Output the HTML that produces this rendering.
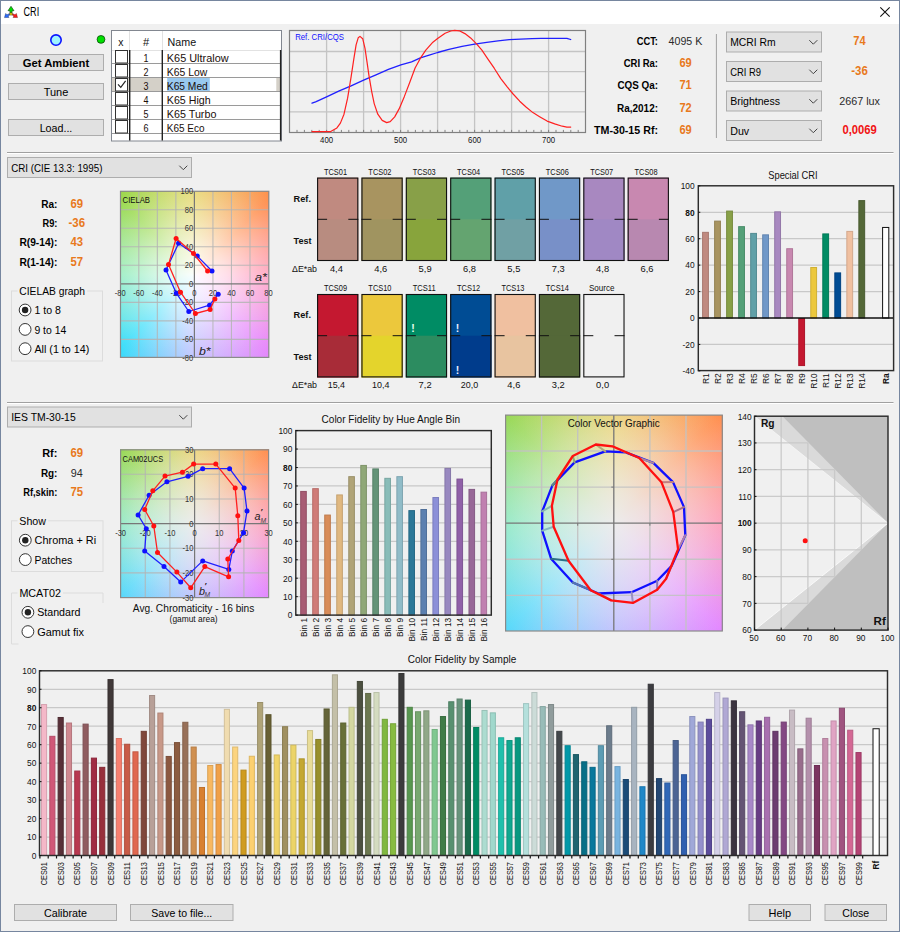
<!DOCTYPE html>
<html><head><meta charset="utf-8"><title>CRI</title>
<style>
html,body{margin:0;padding:0;}
body{width:900px;height:932px;position:relative;overflow:hidden;background:#f0f0f0;font-family:"Liberation Sans",sans-serif;}
.grad{position:absolute;background:
 radial-gradient(circle farthest-corner at 50% 50%, rgba(255,255,255,0.97) 0%, rgba(255,255,255,0.74) 28%, rgba(255,255,255,0.40) 58%, rgba(255,255,255,0.12) 85%, rgba(255,255,255,0) 100%),
 conic-gradient(from 0deg at 50% 50%, #e4d25c 0deg, #ff8c4a 45deg, #ff88b0 90deg, #e682fb 135deg, #b4b4ff 180deg, #30dcfa 225deg, #7ce8b0 270deg, #96d848 315deg, #e4d25c 360deg);}
.grad2{position:absolute;background:
 radial-gradient(circle farthest-corner at 50% 50%, rgba(236,236,236,1) 0%, rgba(238,238,238,0.86) 20%, rgba(242,242,242,0.66) 40%, rgba(246,246,246,0.44) 60%, rgba(250,250,250,0.2) 80%, rgba(255,255,255,0) 100%),
 conic-gradient(from 0deg at 50% 50%, #e6c850 0deg, #ff8e4e 45deg, #ff80a4 90deg, #e286ff 135deg, #aaacff 180deg, #56d8fa 225deg, #70e4b4 270deg, #98d856 315deg, #e6c850 360deg);}
svg{position:absolute;left:0;top:0;}
text{font-family:"Liberation Sans",sans-serif;}
</style></head>
<body>
<div class="grad" style="left:120px;top:191px;width:149px;height:167px"></div>
<div class="grad2" style="left:120px;top:449px;width:149px;height:149px"></div>
<div class="grad2" style="left:505px;top:415px;width:218px;height:216px"></div>

<svg width="900" height="932" viewBox="0 0 900 932">
<rect x="1.00" y="1.00" width="898.00" height="23.00" fill="#ffffff"/>
<rect x="0.50" y="0.50" width="899.00" height="931.00" fill="none" stroke="#76869f" stroke-width="1"/>
<g stroke-linejoin="round"><path d="M11 6.3 L14 10.7 L12.1 10.7 L12.1 12.7 L9.9 12.7 L9.9 10.7 L8 10.7 Z" fill="#00dd00" stroke="#123812" stroke-width="0.6"/><path d="M4.5 17.6 L5.6 13.5 L7 14.7 L9.5 13.5 L9.9 15 L8 16 L9 17.4 Z" fill="#2a6cff" stroke="#102050" stroke-width="0.4"/><path d="M17.5 17.6 L16.4 13.5 L15 14.7 L12.5 13.5 L12.1 15 L14 16 L13 17.4 Z" fill="#ff1818" stroke="#501010" stroke-width="0.4"/><rect x="9.8" y="12.8" width="2.4" height="2.3" fill="#f2e200" stroke="#222" stroke-width="0.4"/></g>
<text x="23.50" y="16.10" font-size="12.5" fill="#000" textLength="15.70" lengthAdjust="spacingAndGlyphs">CRI</text>
<path d="M880.3 7.3 L889.7 16.7 M889.7 7.3 L880.3 16.7" stroke="#111" stroke-width="1.1" fill="none"/>
<circle cx="56" cy="40.1" r="5.2" fill="#9ff4ff" stroke="#0a14ff" stroke-width="1.6"/>
<circle cx="101" cy="39.4" r="3.9" fill="#00e000" stroke="#0a4a0a" stroke-width="0.8"/>
<rect x="8.50" y="54.50" width="95.00" height="16.00" fill="#e1e1e1" stroke="#adadad" stroke-width="1"/>
<text x="22.80" y="66.60" font-size="11.5" fill="#000" font-weight="bold" textLength="66.40" lengthAdjust="spacingAndGlyphs">Get Ambient</text>
<rect x="8.50" y="83.50" width="95.00" height="16.00" fill="#e1e1e1" stroke="#adadad" stroke-width="1"/>
<text x="43.65" y="95.60" font-size="11.5" fill="#000" textLength="24.70" lengthAdjust="spacingAndGlyphs">Tune</text>
<rect x="8.50" y="119.50" width="95.00" height="16.00" fill="#e1e1e1" stroke="#adadad" stroke-width="1"/>
<text x="39.65" y="131.60" font-size="11.5" fill="#000" textLength="32.70" lengthAdjust="spacingAndGlyphs">Load...</text>
<rect x="111.50" y="30.50" width="170.00" height="110.50" fill="#ffffff" stroke="#828790" stroke-width="1"/>
<line x1="112.00" y1="50.50" x2="281.00" y2="50.50" stroke="#e2e2e2" stroke-width="1"/>
<line x1="129.50" y1="31.00" x2="129.50" y2="50.00" stroke="#e2e2e2" stroke-width="1"/>
<line x1="162.50" y1="31.00" x2="162.50" y2="50.00" stroke="#e2e2e2" stroke-width="1"/>
<text x="118.20" y="46.00" font-size="11.5" fill="#111" textLength="5.20" lengthAdjust="spacingAndGlyphs">x</text>
<text x="142.90" y="45.50" font-size="11.5" fill="#111" textLength="6.20" lengthAdjust="spacingAndGlyphs">#</text>
<text x="167.60" y="45.50" font-size="11.5" fill="#111" textLength="28.60" lengthAdjust="spacingAndGlyphs">Name</text>
<rect x="112.00" y="77.50" width="50.00" height="13.50" fill="#d4d0c8"/>
<rect x="167.20" y="78.00" width="42.60" height="13.00" fill="#99c9ef"/>
<rect x="276.30" y="77.50" width="4.00" height="13.50" fill="#d4d0c8"/>
<line x1="112.00" y1="63.50" x2="281.00" y2="63.50" stroke="#9a9a9a" stroke-width="1"/>
<text x="143.50" y="61.80" font-size="11.5" fill="#1a0e0a" textLength="5.00" lengthAdjust="spacingAndGlyphs">1</text>
<text x="166.80" y="61.80" font-size="11.5" fill="#1a0e0a" textLength="61.80" lengthAdjust="spacingAndGlyphs">K65 Ultralow</text>
<rect x="115.50" y="50.50" width="12.00" height="12.50" fill="#ffffff" stroke="#333333" stroke-width="1"/>
<line x1="112.00" y1="77.50" x2="281.00" y2="77.50" stroke="#9a9a9a" stroke-width="1"/>
<text x="143.50" y="75.80" font-size="11.5" fill="#1a0e0a" textLength="5.00" lengthAdjust="spacingAndGlyphs">2</text>
<text x="166.80" y="75.80" font-size="11.5" fill="#1a0e0a" textLength="40.40" lengthAdjust="spacingAndGlyphs">K65 Low</text>
<rect x="115.50" y="64.50" width="12.00" height="12.50" fill="#ffffff" stroke="#333333" stroke-width="1"/>
<line x1="112.00" y1="91.50" x2="281.00" y2="91.50" stroke="#9a9a9a" stroke-width="1"/>
<text x="143.50" y="89.80" font-size="11.5" fill="#1a0e0a" textLength="5.00" lengthAdjust="spacingAndGlyphs">3</text>
<text x="166.80" y="89.80" font-size="11.5" fill="#1a0e0a" textLength="41.00" lengthAdjust="spacingAndGlyphs">K65 Med</text>
<rect x="115.50" y="78.50" width="12.00" height="12.50" fill="#ffffff" stroke="#333333" stroke-width="1"/>
<line x1="112.00" y1="105.50" x2="281.00" y2="105.50" stroke="#9a9a9a" stroke-width="1"/>
<text x="143.50" y="103.80" font-size="11.5" fill="#1a0e0a" textLength="5.00" lengthAdjust="spacingAndGlyphs">4</text>
<text x="166.80" y="103.80" font-size="11.5" fill="#1a0e0a" textLength="43.80" lengthAdjust="spacingAndGlyphs">K65 High</text>
<rect x="115.50" y="92.50" width="12.00" height="12.50" fill="#ffffff" stroke="#333333" stroke-width="1"/>
<line x1="112.00" y1="119.50" x2="281.00" y2="119.50" stroke="#9a9a9a" stroke-width="1"/>
<text x="143.50" y="117.80" font-size="11.5" fill="#1a0e0a" textLength="5.00" lengthAdjust="spacingAndGlyphs">5</text>
<text x="166.80" y="117.80" font-size="11.5" fill="#1a0e0a" textLength="49.60" lengthAdjust="spacingAndGlyphs">K65 Turbo</text>
<rect x="115.50" y="106.50" width="12.00" height="12.50" fill="#ffffff" stroke="#333333" stroke-width="1"/>
<line x1="112.00" y1="133.50" x2="281.00" y2="133.50" stroke="#9a9a9a" stroke-width="1"/>
<text x="143.50" y="131.80" font-size="11.5" fill="#1a0e0a" textLength="5.00" lengthAdjust="spacingAndGlyphs">6</text>
<text x="166.80" y="131.80" font-size="11.5" fill="#1a0e0a" textLength="37.80" lengthAdjust="spacingAndGlyphs">K65 Eco</text>
<rect x="115.50" y="120.50" width="12.00" height="12.50" fill="#ffffff" stroke="#333333" stroke-width="1"/>
<path d="M118 84.3 L120.8 87.4 L125.6 80.9" stroke="#222" stroke-width="1.2" fill="none"/>
<line x1="129.70" y1="50.00" x2="129.70" y2="140.50" stroke="#222" stroke-width="1.4"/>
<line x1="162.30" y1="50.00" x2="162.30" y2="140.50" stroke="#222" stroke-width="1.4"/>
<line x1="280.60" y1="50.00" x2="280.60" y2="140.50" stroke="#222" stroke-width="1.4"/>
<rect x="289.50" y="30.50" width="296.00" height="102.00" fill="#f0f0f0" stroke="none" stroke-width="1"/>
<line x1="326.60" y1="30.50" x2="326.60" y2="132.50" stroke="#c4c4c4" stroke-width="1.3"/>
<line x1="363.60" y1="30.50" x2="363.60" y2="132.50" stroke="#c4c4c4" stroke-width="1.3"/>
<line x1="400.60" y1="30.50" x2="400.60" y2="132.50" stroke="#c4c4c4" stroke-width="1.3"/>
<line x1="437.60" y1="30.50" x2="437.60" y2="132.50" stroke="#c4c4c4" stroke-width="1.3"/>
<line x1="474.60" y1="30.50" x2="474.60" y2="132.50" stroke="#c4c4c4" stroke-width="1.3"/>
<line x1="511.60" y1="30.50" x2="511.60" y2="132.50" stroke="#c4c4c4" stroke-width="1.3"/>
<line x1="548.60" y1="30.50" x2="548.60" y2="132.50" stroke="#c4c4c4" stroke-width="1.3"/>
<line x1="289.50" y1="51.50" x2="585.50" y2="51.50" stroke="#c4c4c4" stroke-width="1.3"/>
<line x1="289.50" y1="71.60" x2="585.50" y2="71.60" stroke="#c4c4c4" stroke-width="1.3"/>
<line x1="289.50" y1="91.60" x2="585.50" y2="91.60" stroke="#c4c4c4" stroke-width="1.3"/>
<line x1="289.50" y1="111.80" x2="585.50" y2="111.80" stroke="#c4c4c4" stroke-width="1.3"/>
<line x1="297.00" y1="129.90" x2="297.00" y2="132.50" stroke="#777" stroke-width="0.9"/>
<line x1="304.40" y1="129.90" x2="304.40" y2="132.50" stroke="#777" stroke-width="0.9"/>
<line x1="311.80" y1="129.90" x2="311.80" y2="132.50" stroke="#777" stroke-width="0.9"/>
<line x1="319.20" y1="129.90" x2="319.20" y2="132.50" stroke="#777" stroke-width="0.9"/>
<line x1="326.60" y1="129.90" x2="326.60" y2="132.50" stroke="#777" stroke-width="0.9"/>
<line x1="334.00" y1="129.90" x2="334.00" y2="132.50" stroke="#777" stroke-width="0.9"/>
<line x1="341.40" y1="129.90" x2="341.40" y2="132.50" stroke="#777" stroke-width="0.9"/>
<line x1="348.80" y1="129.90" x2="348.80" y2="132.50" stroke="#777" stroke-width="0.9"/>
<line x1="356.20" y1="129.90" x2="356.20" y2="132.50" stroke="#777" stroke-width="0.9"/>
<line x1="363.60" y1="129.90" x2="363.60" y2="132.50" stroke="#777" stroke-width="0.9"/>
<line x1="371.00" y1="129.90" x2="371.00" y2="132.50" stroke="#777" stroke-width="0.9"/>
<line x1="378.40" y1="129.90" x2="378.40" y2="132.50" stroke="#777" stroke-width="0.9"/>
<line x1="385.80" y1="129.90" x2="385.80" y2="132.50" stroke="#777" stroke-width="0.9"/>
<line x1="393.20" y1="129.90" x2="393.20" y2="132.50" stroke="#777" stroke-width="0.9"/>
<line x1="400.60" y1="129.90" x2="400.60" y2="132.50" stroke="#777" stroke-width="0.9"/>
<line x1="408.00" y1="129.90" x2="408.00" y2="132.50" stroke="#777" stroke-width="0.9"/>
<line x1="415.40" y1="129.90" x2="415.40" y2="132.50" stroke="#777" stroke-width="0.9"/>
<line x1="422.80" y1="129.90" x2="422.80" y2="132.50" stroke="#777" stroke-width="0.9"/>
<line x1="430.20" y1="129.90" x2="430.20" y2="132.50" stroke="#777" stroke-width="0.9"/>
<line x1="437.60" y1="129.90" x2="437.60" y2="132.50" stroke="#777" stroke-width="0.9"/>
<line x1="445.00" y1="129.90" x2="445.00" y2="132.50" stroke="#777" stroke-width="0.9"/>
<line x1="452.40" y1="129.90" x2="452.40" y2="132.50" stroke="#777" stroke-width="0.9"/>
<line x1="459.80" y1="129.90" x2="459.80" y2="132.50" stroke="#777" stroke-width="0.9"/>
<line x1="467.20" y1="129.90" x2="467.20" y2="132.50" stroke="#777" stroke-width="0.9"/>
<line x1="474.60" y1="129.90" x2="474.60" y2="132.50" stroke="#777" stroke-width="0.9"/>
<line x1="482.00" y1="129.90" x2="482.00" y2="132.50" stroke="#777" stroke-width="0.9"/>
<line x1="489.40" y1="129.90" x2="489.40" y2="132.50" stroke="#777" stroke-width="0.9"/>
<line x1="496.80" y1="129.90" x2="496.80" y2="132.50" stroke="#777" stroke-width="0.9"/>
<line x1="504.20" y1="129.90" x2="504.20" y2="132.50" stroke="#777" stroke-width="0.9"/>
<line x1="511.60" y1="129.90" x2="511.60" y2="132.50" stroke="#777" stroke-width="0.9"/>
<line x1="519.00" y1="129.90" x2="519.00" y2="132.50" stroke="#777" stroke-width="0.9"/>
<line x1="526.40" y1="129.90" x2="526.40" y2="132.50" stroke="#777" stroke-width="0.9"/>
<line x1="533.80" y1="129.90" x2="533.80" y2="132.50" stroke="#777" stroke-width="0.9"/>
<line x1="541.20" y1="129.90" x2="541.20" y2="132.50" stroke="#777" stroke-width="0.9"/>
<line x1="548.60" y1="129.90" x2="548.60" y2="132.50" stroke="#777" stroke-width="0.9"/>
<line x1="556.00" y1="129.90" x2="556.00" y2="132.50" stroke="#777" stroke-width="0.9"/>
<line x1="563.40" y1="129.90" x2="563.40" y2="132.50" stroke="#777" stroke-width="0.9"/>
<line x1="570.80" y1="129.90" x2="570.80" y2="132.50" stroke="#777" stroke-width="0.9"/>
<line x1="578.20" y1="129.90" x2="578.20" y2="132.50" stroke="#777" stroke-width="0.9"/>
<rect x="289.50" y="30.50" width="296.00" height="102.00" fill="none" stroke="#808080" stroke-width="1.2"/>
<path d="M312.0 103.2 L315.6 101.8 L326.6 96.8 L338.7 91.1 L351.1 85.8 L363.6 80.1 L376.0 74.8 L388.4 69.4 L400.9 64.8 L411.6 61.8 L420.4 57.9 L427.6 55.6 L430.0 54.9 L437.6 52.5 L448.9 49.3 L462.1 46.4 L474.6 44.2 L486.7 42.3 L498.0 40.8 L509.3 39.6 L520.7 39.1 L532.0 38.7 L541.4 38.3 L554.7 38.3 L566.9 38.3 L570.7 39.5" fill="none" stroke="#2020ff" stroke-width="1.3" stroke-linejoin="round" stroke-linecap="round"/>
<path d="M312.0 131.6 L330.7 131.6 L336.9 127.9 L340.4 123.1 L344.0 114.2 L347.6 98.2 L351.1 76.9 L353.8 59.1 L356.1 44.9 L358.2 37.8 L360.0 36.4 L362.7 38.7 L365.0 48.4 L367.1 62.7 L368.9 75.1 L371.6 91.1 L374.2 103.6 L377.8 114.2 L382.2 120.4 L386.7 122.6 L390.2 121.7 L394.7 116.9 L399.1 108.9 L404.4 96.4 L409.8 82.2 L415.1 68.0 L420.4 58.2 L425.8 50.2 L432.9 42.2 L437.6 38.5 L445.1 33.2 L450.8 31.0 L454.6 30.4 L459.3 30.8 L464.9 33.6 L470.6 37.9 L476.3 43.6 L481.9 50.2 L487.6 58.7 L494.2 68.2 L500.8 78.6 L507.4 87.1 L513.1 94.0 L519.7 101.2 L526.3 107.3 L532.9 112.6 L539.6 116.7 L547.1 121.1 L554.7 123.9 L562.2 126.2 L566.9 127.1 L570.7 127.1" fill="none" stroke="#ff2020" stroke-width="1.2" stroke-linejoin="round" stroke-linecap="round"/>
<text x="295.20" y="39.60" font-size="8.8" fill="#1010ff" textLength="48.80" lengthAdjust="spacingAndGlyphs">Ref. CRI/CQS</text>
<text x="320.10" y="143.00" font-size="8.6" fill="#111" textLength="13.00" lengthAdjust="spacingAndGlyphs">400</text>
<text x="394.10" y="143.00" font-size="8.6" fill="#111" textLength="13.00" lengthAdjust="spacingAndGlyphs">500</text>
<text x="468.10" y="143.00" font-size="8.6" fill="#111" textLength="13.00" lengthAdjust="spacingAndGlyphs">600</text>
<text x="542.10" y="143.00" font-size="8.6" fill="#111" textLength="13.00" lengthAdjust="spacingAndGlyphs">700</text>
<text x="636.70" y="44.90" font-size="11.8" fill="#000" font-weight="bold" textLength="21.30" lengthAdjust="spacingAndGlyphs">CCT:</text>
<text x="623.70" y="67.30" font-size="11.8" fill="#000" font-weight="bold" textLength="34.30" lengthAdjust="spacingAndGlyphs">CRI Ra:</text>
<text x="617.50" y="89.40" font-size="11.8" fill="#000" font-weight="bold" textLength="40.50" lengthAdjust="spacingAndGlyphs">CQS Qa:</text>
<text x="617.10" y="111.60" font-size="11.8" fill="#000" font-weight="bold" textLength="40.90" lengthAdjust="spacingAndGlyphs">Ra,2012:</text>
<text x="594.00" y="133.80" font-size="11.8" fill="#000" font-weight="bold" textLength="64.00" lengthAdjust="spacingAndGlyphs">TM-30-15 Rf:</text>
<text x="668.60" y="44.90" font-size="11.5" fill="#2a2a2a" textLength="33.70" lengthAdjust="spacingAndGlyphs">4095 K</text>
<text x="679.45" y="67.30" font-size="12.2" fill="#e8791c" font-weight="bold" textLength="12.30" lengthAdjust="spacingAndGlyphs">69</text>
<text x="679.45" y="89.40" font-size="12.2" fill="#e8791c" font-weight="bold" textLength="12.30" lengthAdjust="spacingAndGlyphs">71</text>
<text x="679.45" y="111.60" font-size="12.2" fill="#e8791c" font-weight="bold" textLength="12.30" lengthAdjust="spacingAndGlyphs">72</text>
<text x="679.45" y="133.80" font-size="12.2" fill="#e8791c" font-weight="bold" textLength="12.30" lengthAdjust="spacingAndGlyphs">69</text>
<line x1="716.40" y1="34.00" x2="716.40" y2="138.00" stroke="#a0a0a0" stroke-width="1"/>
<rect x="726.50" y="32.00" width="95.00" height="20.00" fill="#e1e1e1" stroke="#adadad" stroke-width="1"/>
<text x="730.20" y="46.20" font-size="11.5" fill="#000" textLength="45.40" lengthAdjust="spacingAndGlyphs">MCRI Rm</text>
<path d="M809.3 40.2 L813.3 44.2 L817.3 40.2" fill="none" stroke="#444" stroke-width="1"/>
<rect x="726.50" y="61.50" width="95.00" height="20.00" fill="#e1e1e1" stroke="#adadad" stroke-width="1"/>
<text x="730.20" y="75.70" font-size="11.5" fill="#000" textLength="30.80" lengthAdjust="spacingAndGlyphs">CRI R9</text>
<path d="M809.3 69.7 L813.3 73.7 L817.3 69.7" fill="none" stroke="#444" stroke-width="1"/>
<rect x="726.50" y="91.00" width="95.00" height="20.00" fill="#e1e1e1" stroke="#adadad" stroke-width="1"/>
<text x="730.20" y="105.20" font-size="11.5" fill="#000" textLength="49.80" lengthAdjust="spacingAndGlyphs">Brightness</text>
<path d="M809.3 99.2 L813.3 103.2 L817.3 99.2" fill="none" stroke="#444" stroke-width="1"/>
<rect x="726.50" y="120.50" width="95.00" height="20.00" fill="#e1e1e1" stroke="#adadad" stroke-width="1"/>
<text x="730.20" y="134.70" font-size="11.5" fill="#000" textLength="19.00" lengthAdjust="spacingAndGlyphs">Duv</text>
<path d="M809.3 128.7 L813.3 132.7 L817.3 128.7" fill="none" stroke="#444" stroke-width="1"/>
<text x="853.35" y="45.20" font-size="12.2" fill="#e8791c" font-weight="bold" textLength="12.30" lengthAdjust="spacingAndGlyphs">74</text>
<text x="851.20" y="74.70" font-size="12.2" fill="#e8791c" font-weight="bold" textLength="16.60" lengthAdjust="spacingAndGlyphs">-36</text>
<text x="839.20" y="105.00" font-size="11.5" fill="#2a2a2a" textLength="40.80" lengthAdjust="spacingAndGlyphs">2667 lux</text>
<text x="842.40" y="134.40" font-size="12.2" fill="#f01414" font-weight="bold" textLength="34.40" lengthAdjust="spacingAndGlyphs">0,0069</text>
<line x1="7.00" y1="152.50" x2="893.50" y2="152.50" stroke="#a0a0a0" stroke-width="1"/>
<line x1="7.00" y1="153.50" x2="893.50" y2="153.50" stroke="#ffffff" stroke-width="1"/>
<line x1="7.00" y1="402.50" x2="893.50" y2="402.50" stroke="#a0a0a0" stroke-width="1"/>
<line x1="7.00" y1="403.50" x2="893.50" y2="403.50" stroke="#ffffff" stroke-width="1"/>
<rect x="7.50" y="157.50" width="184.00" height="20.00" fill="#e1e1e1" stroke="#adadad" stroke-width="1"/>
<text x="11.20" y="171.70" font-size="11.5" fill="#000" textLength="91.20" lengthAdjust="spacingAndGlyphs">CRI (CIE 13.3: 1995)</text>
<path d="M179.3 165.7 L183.3 169.7 L187.3 165.7" fill="none" stroke="#444" stroke-width="1"/>
<text x="41.20" y="207.80" font-size="11.8" fill="#000" font-weight="bold" textLength="16.20" lengthAdjust="spacingAndGlyphs">Ra:</text>
<text x="42.50" y="226.90" font-size="11.8" fill="#000" font-weight="bold" textLength="14.90" lengthAdjust="spacingAndGlyphs">R9:</text>
<text x="19.40" y="246.30" font-size="11.8" fill="#000" font-weight="bold" textLength="38.00" lengthAdjust="spacingAndGlyphs">R(9-14):</text>
<text x="19.40" y="265.60" font-size="11.8" fill="#000" font-weight="bold" textLength="38.00" lengthAdjust="spacingAndGlyphs">R(1-14):</text>
<text x="70.50" y="207.80" font-size="12.2" fill="#e8791c" font-weight="bold" textLength="12.60" lengthAdjust="spacingAndGlyphs">69</text>
<text x="68.50" y="226.90" font-size="12.2" fill="#e8791c" font-weight="bold" textLength="16.60" lengthAdjust="spacingAndGlyphs">-36</text>
<text x="70.50" y="246.30" font-size="12.2" fill="#e8791c" font-weight="bold" textLength="12.60" lengthAdjust="spacingAndGlyphs">43</text>
<text x="70.50" y="265.60" font-size="12.2" fill="#e8791c" font-weight="bold" textLength="12.60" lengthAdjust="spacingAndGlyphs">57</text>
<rect x="11.50" y="291.00" width="91.00" height="70.00" fill="none" stroke="#dcdcdc" stroke-width="1"/>
<rect x="17.50" y="284.50" width="69.70" height="12.00" fill="#f0f0f0"/>
<text x="19.30" y="294.70" font-size="11.5" fill="#000" textLength="65.70" lengthAdjust="spacingAndGlyphs">CIELAB graph</text>
<circle cx="25.1" cy="310" r="5.9" fill="#fff" stroke="#333" stroke-width="1"/>
<circle cx="25.1" cy="310" r="3.2" fill="#222"/>
<text x="34.40" y="314.10" font-size="11.5" fill="#000" textLength="26.50" lengthAdjust="spacingAndGlyphs">1 to 8</text>
<circle cx="25.1" cy="329.4" r="5.9" fill="#fff" stroke="#333" stroke-width="1"/>
<text x="34.40" y="333.50" font-size="11.5" fill="#000" textLength="31.90" lengthAdjust="spacingAndGlyphs">9 to 14</text>
<circle cx="25.1" cy="348.7" r="5.9" fill="#fff" stroke="#333" stroke-width="1"/>
<text x="34.40" y="352.80" font-size="11.5" fill="#000" textLength="54.90" lengthAdjust="spacingAndGlyphs">All (1 to 14)</text>
<line x1="138.81" y1="191.30" x2="138.81" y2="357.40" stroke="#b4b4b4" stroke-width="1.1" stroke-opacity="0.85"/>
<line x1="157.34" y1="191.30" x2="157.34" y2="357.40" stroke="#b4b4b4" stroke-width="1.1" stroke-opacity="0.85"/>
<line x1="175.87" y1="191.30" x2="175.87" y2="357.40" stroke="#b4b4b4" stroke-width="1.1" stroke-opacity="0.85"/>
<line x1="212.93" y1="191.30" x2="212.93" y2="357.40" stroke="#b4b4b4" stroke-width="1.1" stroke-opacity="0.85"/>
<line x1="231.46" y1="191.30" x2="231.46" y2="357.40" stroke="#b4b4b4" stroke-width="1.1" stroke-opacity="0.85"/>
<line x1="249.99" y1="191.30" x2="249.99" y2="357.40" stroke="#b4b4b4" stroke-width="1.1" stroke-opacity="0.85"/>
<line x1="120.50" y1="209.68" x2="268.80" y2="209.68" stroke="#b4b4b4" stroke-width="1.1" stroke-opacity="0.85"/>
<line x1="120.50" y1="228.21" x2="268.80" y2="228.21" stroke="#b4b4b4" stroke-width="1.1" stroke-opacity="0.85"/>
<line x1="120.50" y1="246.74" x2="268.80" y2="246.74" stroke="#b4b4b4" stroke-width="1.1" stroke-opacity="0.85"/>
<line x1="120.50" y1="265.27" x2="268.80" y2="265.27" stroke="#b4b4b4" stroke-width="1.1" stroke-opacity="0.85"/>
<line x1="120.50" y1="302.33" x2="268.80" y2="302.33" stroke="#b4b4b4" stroke-width="1.1" stroke-opacity="0.85"/>
<line x1="120.50" y1="320.86" x2="268.80" y2="320.86" stroke="#b4b4b4" stroke-width="1.1" stroke-opacity="0.85"/>
<line x1="120.50" y1="339.39" x2="268.80" y2="339.39" stroke="#b4b4b4" stroke-width="1.1" stroke-opacity="0.85"/>
<line x1="194.40" y1="191.30" x2="194.40" y2="357.40" stroke="#777" stroke-width="1.2"/>
<line x1="120.50" y1="283.80" x2="268.80" y2="283.80" stroke="#777" stroke-width="1.2"/>
<rect x="120.50" y="191.30" width="148.30" height="166.10" fill="none" stroke="#8a8a8a" stroke-width="1.2"/>
<text x="122.60" y="203.00" font-size="8.8" fill="#111" textLength="27.40" lengthAdjust="spacingAndGlyphs">CIELAB</text>
<text x="114.83" y="295.60" font-size="8.2" fill="#333" textLength="10.90" lengthAdjust="spacingAndGlyphs">-80</text>
<text x="133.36" y="295.60" font-size="8.2" fill="#333" textLength="10.90" lengthAdjust="spacingAndGlyphs">-60</text>
<text x="151.89" y="295.60" font-size="8.2" fill="#333" textLength="10.90" lengthAdjust="spacingAndGlyphs">-40</text>
<text x="170.42" y="295.60" font-size="8.2" fill="#333" textLength="10.90" lengthAdjust="spacingAndGlyphs">-20</text>
<text x="192.30" y="295.60" font-size="8.2" fill="#333" textLength="4.20" lengthAdjust="spacingAndGlyphs">0</text>
<text x="208.73" y="295.60" font-size="8.2" fill="#333" textLength="8.39" lengthAdjust="spacingAndGlyphs">20</text>
<text x="227.26" y="295.60" font-size="8.2" fill="#333" textLength="8.39" lengthAdjust="spacingAndGlyphs">40</text>
<text x="245.79" y="295.60" font-size="8.2" fill="#333" textLength="8.39" lengthAdjust="spacingAndGlyphs">60</text>
<text x="264.32" y="295.60" font-size="8.2" fill="#333" textLength="8.39" lengthAdjust="spacingAndGlyphs">80</text>
<text x="180.61" y="194.15" font-size="8.2" fill="#333" textLength="12.59" lengthAdjust="spacingAndGlyphs">100</text>
<text x="184.81" y="212.68" font-size="8.2" fill="#333" textLength="8.39" lengthAdjust="spacingAndGlyphs">80</text>
<text x="184.81" y="231.21" font-size="8.2" fill="#333" textLength="8.39" lengthAdjust="spacingAndGlyphs">60</text>
<text x="184.81" y="249.74" font-size="8.2" fill="#333" textLength="8.39" lengthAdjust="spacingAndGlyphs">40</text>
<text x="184.81" y="268.27" font-size="8.2" fill="#333" textLength="8.39" lengthAdjust="spacingAndGlyphs">20</text>
<text x="189.00" y="286.80" font-size="8.2" fill="#333" textLength="4.20" lengthAdjust="spacingAndGlyphs">0</text>
<text x="182.30" y="305.33" font-size="8.2" fill="#333" textLength="10.90" lengthAdjust="spacingAndGlyphs">-20</text>
<text x="182.30" y="323.86" font-size="8.2" fill="#333" textLength="10.90" lengthAdjust="spacingAndGlyphs">-40</text>
<text x="182.30" y="342.39" font-size="8.2" fill="#333" textLength="10.90" lengthAdjust="spacingAndGlyphs">-60</text>
<text x="182.30" y="360.92" font-size="8.2" fill="#333" textLength="10.90" lengthAdjust="spacingAndGlyphs">-80</text>
<text x="255.00" y="280.60" font-size="11.5" fill="#222" font-style="italic" textLength="12.00" lengthAdjust="spacingAndGlyphs">a*</text>
<text x="199.00" y="354.60" font-size="11.5" fill="#222" font-style="italic" textLength="11.60" lengthAdjust="spacingAndGlyphs">b*</text>
<path d="M212.0 271.0 L197.3 256.1 L178.6 243.3 L166.0 270.0 L176.3 293.2 L188.8 311.5 L209.5 305.2 L218.2 294.2" fill="none" stroke="#2020ff" stroke-width="1.3" stroke-linejoin="round" stroke-linecap="round"/>
<circle cx="212.0" cy="271.0" r="2.5" fill="#1010ff"/>
<circle cx="197.3" cy="256.1" r="2.5" fill="#1010ff"/>
<circle cx="178.6" cy="243.3" r="2.5" fill="#1010ff"/>
<circle cx="166.0" cy="270.0" r="2.5" fill="#1010ff"/>
<circle cx="176.3" cy="293.2" r="2.5" fill="#1010ff"/>
<circle cx="188.8" cy="311.5" r="2.5" fill="#1010ff"/>
<circle cx="209.5" cy="305.2" r="2.5" fill="#1010ff"/>
<circle cx="218.2" cy="294.2" r="2.5" fill="#1010ff"/>
<path d="M207.6 271.0 L193.5 253.6 L176.1 238.5 L168.5 264.6 L180.5 292.2 L195.4 313.5 L210.1 309.6 L214.9 299.0" fill="none" stroke="#ff2020" stroke-width="1.3" stroke-linejoin="round" stroke-linecap="round"/>
<circle cx="207.6" cy="271.0" r="2.5" fill="#ff1010"/>
<circle cx="193.5" cy="253.6" r="2.5" fill="#ff1010"/>
<circle cx="176.1" cy="238.5" r="2.5" fill="#ff1010"/>
<circle cx="168.5" cy="264.6" r="2.5" fill="#ff1010"/>
<circle cx="180.5" cy="292.2" r="2.5" fill="#ff1010"/>
<circle cx="195.4" cy="313.5" r="2.5" fill="#ff1010"/>
<circle cx="210.1" cy="309.6" r="2.5" fill="#ff1010"/>
<circle cx="214.9" cy="299.0" r="2.5" fill="#ff1010"/>
<rect x="317.10" y="177.60" width="41.20" height="83.40" fill="#c08a80"/>
<rect x="317.10" y="219.30" width="41.20" height="41.70" fill="#b88c80"/>
<rect x="317.60" y="178.10" width="40.20" height="82.40" fill="none" stroke="#111" stroke-width="1.1"/>
<line x1="317.10" y1="219.30" x2="327.10" y2="219.30" stroke="#111" stroke-width="1"/>
<line x1="348.30" y1="219.30" x2="358.30" y2="219.30" stroke="#111" stroke-width="1"/>
<text x="324.00" y="174.90" font-size="9.3" fill="#111" textLength="23.00" lengthAdjust="spacingAndGlyphs">TCS01</text>
<text x="329.90" y="271.60" font-size="9.3" fill="#111" textLength="13.00" lengthAdjust="spacingAndGlyphs">4,4</text>
<rect x="361.47" y="177.60" width="41.20" height="83.40" fill="#a89460"/>
<rect x="361.47" y="219.30" width="41.20" height="41.70" fill="#a09460"/>
<rect x="361.97" y="178.10" width="40.20" height="82.40" fill="none" stroke="#111" stroke-width="1.1"/>
<line x1="361.47" y1="219.30" x2="371.47" y2="219.30" stroke="#111" stroke-width="1"/>
<line x1="392.67" y1="219.30" x2="402.67" y2="219.30" stroke="#111" stroke-width="1"/>
<text x="368.37" y="174.90" font-size="9.3" fill="#111" textLength="23.00" lengthAdjust="spacingAndGlyphs">TCS02</text>
<text x="374.27" y="271.60" font-size="9.3" fill="#111" textLength="13.00" lengthAdjust="spacingAndGlyphs">4,6</text>
<rect x="405.84" y="177.60" width="41.20" height="83.40" fill="#88a048"/>
<rect x="405.84" y="219.30" width="41.20" height="41.70" fill="#88a43c"/>
<rect x="406.34" y="178.10" width="40.20" height="82.40" fill="none" stroke="#111" stroke-width="1.1"/>
<line x1="405.84" y1="219.30" x2="415.84" y2="219.30" stroke="#111" stroke-width="1"/>
<line x1="437.04" y1="219.30" x2="447.04" y2="219.30" stroke="#111" stroke-width="1"/>
<text x="412.74" y="174.90" font-size="9.3" fill="#111" textLength="23.00" lengthAdjust="spacingAndGlyphs">TCS03</text>
<text x="418.64" y="271.60" font-size="9.3" fill="#111" textLength="13.00" lengthAdjust="spacingAndGlyphs">5,9</text>
<rect x="450.21" y="177.60" width="41.20" height="83.40" fill="#54a078"/>
<rect x="450.21" y="219.30" width="41.20" height="41.70" fill="#64a470"/>
<rect x="450.71" y="178.10" width="40.20" height="82.40" fill="none" stroke="#111" stroke-width="1.1"/>
<line x1="450.21" y1="219.30" x2="460.21" y2="219.30" stroke="#111" stroke-width="1"/>
<line x1="481.41" y1="219.30" x2="491.41" y2="219.30" stroke="#111" stroke-width="1"/>
<text x="457.11" y="174.90" font-size="9.3" fill="#111" textLength="23.00" lengthAdjust="spacingAndGlyphs">TCS04</text>
<text x="463.01" y="271.60" font-size="9.3" fill="#111" textLength="13.00" lengthAdjust="spacingAndGlyphs">6,8</text>
<rect x="494.58" y="177.60" width="41.20" height="83.40" fill="#60a0a8"/>
<rect x="494.58" y="219.30" width="41.20" height="41.70" fill="#70a0a4"/>
<rect x="495.08" y="178.10" width="40.20" height="82.40" fill="none" stroke="#111" stroke-width="1.1"/>
<line x1="494.58" y1="219.30" x2="504.58" y2="219.30" stroke="#111" stroke-width="1"/>
<line x1="525.78" y1="219.30" x2="535.78" y2="219.30" stroke="#111" stroke-width="1"/>
<text x="501.48" y="174.90" font-size="9.3" fill="#111" textLength="23.00" lengthAdjust="spacingAndGlyphs">TCS05</text>
<text x="507.38" y="271.60" font-size="9.3" fill="#111" textLength="13.00" lengthAdjust="spacingAndGlyphs">5,5</text>
<rect x="538.95" y="177.60" width="41.20" height="83.40" fill="#7098c8"/>
<rect x="538.95" y="219.30" width="41.20" height="41.70" fill="#7890c8"/>
<rect x="539.45" y="178.10" width="40.20" height="82.40" fill="none" stroke="#111" stroke-width="1.1"/>
<line x1="538.95" y1="219.30" x2="548.95" y2="219.30" stroke="#111" stroke-width="1"/>
<line x1="570.15" y1="219.30" x2="580.15" y2="219.30" stroke="#111" stroke-width="1"/>
<text x="545.85" y="174.90" font-size="9.3" fill="#111" textLength="23.00" lengthAdjust="spacingAndGlyphs">TCS06</text>
<text x="551.75" y="271.60" font-size="9.3" fill="#111" textLength="13.00" lengthAdjust="spacingAndGlyphs">7,3</text>
<rect x="583.32" y="177.60" width="41.20" height="83.40" fill="#a888c0"/>
<rect x="583.32" y="219.30" width="41.20" height="41.70" fill="#a088c4"/>
<rect x="583.82" y="178.10" width="40.20" height="82.40" fill="none" stroke="#111" stroke-width="1.1"/>
<line x1="583.32" y1="219.30" x2="593.32" y2="219.30" stroke="#111" stroke-width="1"/>
<line x1="614.52" y1="219.30" x2="624.52" y2="219.30" stroke="#111" stroke-width="1"/>
<text x="590.22" y="174.90" font-size="9.3" fill="#111" textLength="23.00" lengthAdjust="spacingAndGlyphs">TCS07</text>
<text x="596.12" y="271.60" font-size="9.3" fill="#111" textLength="13.00" lengthAdjust="spacingAndGlyphs">4,8</text>
<rect x="627.69" y="177.60" width="41.20" height="83.40" fill="#c888b0"/>
<rect x="627.69" y="219.30" width="41.20" height="41.70" fill="#b888b0"/>
<rect x="628.19" y="178.10" width="40.20" height="82.40" fill="none" stroke="#111" stroke-width="1.1"/>
<line x1="627.69" y1="219.30" x2="637.69" y2="219.30" stroke="#111" stroke-width="1"/>
<line x1="658.89" y1="219.30" x2="668.89" y2="219.30" stroke="#111" stroke-width="1"/>
<text x="634.59" y="174.90" font-size="9.3" fill="#111" textLength="23.00" lengthAdjust="spacingAndGlyphs">TCS08</text>
<text x="640.49" y="271.60" font-size="9.3" fill="#111" textLength="13.00" lengthAdjust="spacingAndGlyphs">6,6</text>
<rect x="317.10" y="294.00" width="41.20" height="83.40" fill="#c41830"/>
<rect x="317.10" y="335.70" width="41.20" height="41.70" fill="#a82c38"/>
<rect x="317.60" y="294.50" width="40.20" height="82.40" fill="none" stroke="#111" stroke-width="1.1"/>
<line x1="317.10" y1="335.70" x2="327.10" y2="335.70" stroke="#111" stroke-width="1"/>
<line x1="348.30" y1="335.70" x2="358.30" y2="335.70" stroke="#111" stroke-width="1"/>
<text x="324.00" y="291.30" font-size="9.3" fill="#111" textLength="23.00" lengthAdjust="spacingAndGlyphs">TCS09</text>
<text x="327.70" y="388.00" font-size="9.3" fill="#111" textLength="17.40" lengthAdjust="spacingAndGlyphs">15,4</text>
<rect x="361.47" y="294.00" width="41.20" height="83.40" fill="#ecc83c"/>
<rect x="361.47" y="335.70" width="41.20" height="41.70" fill="#e4d42c"/>
<rect x="361.97" y="294.50" width="40.20" height="82.40" fill="none" stroke="#111" stroke-width="1.1"/>
<line x1="361.47" y1="335.70" x2="371.47" y2="335.70" stroke="#111" stroke-width="1"/>
<line x1="392.67" y1="335.70" x2="402.67" y2="335.70" stroke="#111" stroke-width="1"/>
<text x="368.37" y="291.30" font-size="9.3" fill="#111" textLength="23.00" lengthAdjust="spacingAndGlyphs">TCS10</text>
<text x="372.07" y="388.00" font-size="9.3" fill="#111" textLength="17.40" lengthAdjust="spacingAndGlyphs">10,4</text>
<rect x="405.84" y="294.00" width="41.20" height="83.40" fill="#008c64"/>
<rect x="405.84" y="335.70" width="41.20" height="41.70" fill="#2c8c60"/>
<rect x="406.34" y="294.50" width="40.20" height="82.40" fill="none" stroke="#111" stroke-width="1.1"/>
<line x1="405.84" y1="335.70" x2="415.84" y2="335.70" stroke="#111" stroke-width="1"/>
<line x1="437.04" y1="335.70" x2="447.04" y2="335.70" stroke="#111" stroke-width="1"/>
<text x="412.74" y="291.30" font-size="9.3" fill="#111" textLength="23.00" lengthAdjust="spacingAndGlyphs">TCS11</text>
<text x="418.64" y="388.00" font-size="9.3" fill="#111" textLength="13.00" lengthAdjust="spacingAndGlyphs">7,2</text>
<rect x="450.21" y="294.00" width="41.20" height="83.40" fill="#004c94"/>
<rect x="450.21" y="335.70" width="41.20" height="41.70" fill="#003c8c"/>
<rect x="450.71" y="294.50" width="40.20" height="82.40" fill="none" stroke="#111" stroke-width="1.1"/>
<line x1="450.21" y1="335.70" x2="460.21" y2="335.70" stroke="#111" stroke-width="1"/>
<line x1="481.41" y1="335.70" x2="491.41" y2="335.70" stroke="#111" stroke-width="1"/>
<text x="457.11" y="291.30" font-size="9.3" fill="#111" textLength="23.00" lengthAdjust="spacingAndGlyphs">TCS12</text>
<text x="460.81" y="388.00" font-size="9.3" fill="#111" textLength="17.40" lengthAdjust="spacingAndGlyphs">20,0</text>
<rect x="494.58" y="294.00" width="41.20" height="83.40" fill="#f0c0a0"/>
<rect x="494.58" y="335.70" width="41.20" height="41.70" fill="#e8c4a0"/>
<rect x="495.08" y="294.50" width="40.20" height="82.40" fill="none" stroke="#111" stroke-width="1.1"/>
<line x1="494.58" y1="335.70" x2="504.58" y2="335.70" stroke="#111" stroke-width="1"/>
<line x1="525.78" y1="335.70" x2="535.78" y2="335.70" stroke="#111" stroke-width="1"/>
<text x="501.48" y="291.30" font-size="9.3" fill="#111" textLength="23.00" lengthAdjust="spacingAndGlyphs">TCS13</text>
<text x="507.38" y="388.00" font-size="9.3" fill="#111" textLength="13.00" lengthAdjust="spacingAndGlyphs">4,6</text>
<rect x="538.95" y="294.00" width="41.20" height="83.40" fill="#546838"/>
<rect x="538.95" y="335.70" width="41.20" height="41.70" fill="#546838"/>
<rect x="539.45" y="294.50" width="40.20" height="82.40" fill="none" stroke="#111" stroke-width="1.1"/>
<line x1="538.95" y1="335.70" x2="548.95" y2="335.70" stroke="#111" stroke-width="1"/>
<line x1="570.15" y1="335.70" x2="580.15" y2="335.70" stroke="#111" stroke-width="1"/>
<text x="545.85" y="291.30" font-size="9.3" fill="#111" textLength="23.00" lengthAdjust="spacingAndGlyphs">TCS14</text>
<text x="551.75" y="388.00" font-size="9.3" fill="#111" textLength="13.00" lengthAdjust="spacingAndGlyphs">3,2</text>
<rect x="583.32" y="294.00" width="41.20" height="83.40" fill="#f0f0f0"/>
<rect x="583.32" y="335.70" width="41.20" height="41.70" fill="#f0f0f0"/>
<rect x="583.82" y="294.50" width="40.20" height="82.40" fill="none" stroke="#111" stroke-width="1.1"/>
<line x1="583.32" y1="335.70" x2="593.32" y2="335.70" stroke="#111" stroke-width="1"/>
<line x1="614.52" y1="335.70" x2="624.52" y2="335.70" stroke="#111" stroke-width="1"/>
<text x="588.97" y="291.30" font-size="9.3" fill="#111" textLength="25.50" lengthAdjust="spacingAndGlyphs">Source</text>
<text x="596.12" y="388.00" font-size="9.3" fill="#111" textLength="13.00" lengthAdjust="spacingAndGlyphs">0,0</text>
<text x="293.60" y="202.00" font-size="9.3" fill="#111" font-weight="bold" textLength="17.40" lengthAdjust="spacingAndGlyphs">Ref.</text>
<text x="293.60" y="243.50" font-size="9.3" fill="#111" font-weight="bold" textLength="18.00" lengthAdjust="spacingAndGlyphs">Test</text>
<text x="292.00" y="271.60" font-size="9.3" fill="#111" textLength="25.00" lengthAdjust="spacingAndGlyphs">ΔE*ab</text>
<text x="293.60" y="318.40" font-size="9.3" fill="#111" font-weight="bold" textLength="17.40" lengthAdjust="spacingAndGlyphs">Ref.</text>
<text x="293.60" y="359.90" font-size="9.3" fill="#111" font-weight="bold" textLength="18.00" lengthAdjust="spacingAndGlyphs">Test</text>
<text x="292.00" y="388.00" font-size="9.3" fill="#111" textLength="25.00" lengthAdjust="spacingAndGlyphs">ΔE*ab</text>
<text x="411.25" y="332.40" font-size="10.5" fill="#e8fff0" font-weight="bold" textLength="3.50" lengthAdjust="spacingAndGlyphs">!</text>
<text x="455.65" y="332.40" font-size="10.5" fill="#e8f0ff" font-weight="bold" textLength="3.50" lengthAdjust="spacingAndGlyphs">!</text>
<text x="455.65" y="374.00" font-size="10.5" fill="#e8f0ff" font-weight="bold" textLength="3.50" lengthAdjust="spacingAndGlyphs">!</text>
<text x="768.25" y="178.70" font-size="10.6" fill="#111" textLength="49.30" lengthAdjust="spacingAndGlyphs">Special CRI</text>
<line x1="698.30" y1="212.28" x2="893.60" y2="212.28" stroke="#c8c8c8" stroke-width="1.25"/>
<line x1="698.30" y1="238.71" x2="893.60" y2="238.71" stroke="#c8c8c8" stroke-width="1.25"/>
<line x1="698.30" y1="265.14" x2="893.60" y2="265.14" stroke="#c8c8c8" stroke-width="1.25"/>
<line x1="698.30" y1="291.57" x2="893.60" y2="291.57" stroke="#c8c8c8" stroke-width="1.25"/>
<line x1="698.30" y1="344.43" x2="893.60" y2="344.43" stroke="#c8c8c8" stroke-width="1.25"/>
<rect x="702.60" y="232.34" width="5.80" height="85.66" fill="#c08a80" stroke="#a87970" stroke-width="1"/>
<rect x="714.62" y="221.11" width="5.80" height="96.89" fill="#a89460" stroke="#938254" stroke-width="1"/>
<rect x="726.64" y="211.06" width="5.80" height="106.94" fill="#88a048" stroke="#778c3f" stroke-width="1"/>
<rect x="738.66" y="226.66" width="5.80" height="91.34" fill="#54a078" stroke="#498c69" stroke-width="1"/>
<rect x="750.68" y="233.40" width="5.80" height="84.60" fill="#60a0a8" stroke="#548c93" stroke-width="1"/>
<rect x="762.70" y="234.85" width="5.80" height="83.15" fill="#7098c8" stroke="#6285b0" stroke-width="1"/>
<rect x="774.72" y="211.85" width="5.80" height="106.15" fill="#a888c0" stroke="#9377a8" stroke-width="1"/>
<rect x="786.74" y="248.72" width="5.80" height="69.28" fill="#c888b0" stroke="#b0779a" stroke-width="1"/>
<rect x="798.76" y="318.50" width="5.80" height="47.07" fill="#c41830" stroke="#ac152a" stroke-width="1"/>
<rect x="810.78" y="267.49" width="5.80" height="50.51" fill="#ecc83c" stroke="#cfb034" stroke-width="1"/>
<rect x="822.80" y="233.92" width="5.80" height="84.08" fill="#008c64" stroke="#007b58" stroke-width="1"/>
<rect x="834.82" y="272.91" width="5.80" height="45.09" fill="#004c94" stroke="#004282" stroke-width="1"/>
<rect x="846.84" y="231.41" width="5.80" height="86.59" fill="#f0c0a0" stroke="#d3a88c" stroke-width="1"/>
<rect x="858.86" y="200.62" width="5.80" height="117.38" fill="#546838" stroke="#495b31" stroke-width="1"/>
<rect x="882.60" y="227.45" width="6.20" height="90.55" fill="#fff" stroke="#111" stroke-width="1"/>
<line x1="698.30" y1="318.00" x2="893.60" y2="318.00" stroke="#111" stroke-width="1.3"/>
<rect x="698.30" y="185.80" width="195.30" height="184.80" fill="none" stroke="#2c2c2c" stroke-width="1.45"/>
<text x="680.63" y="189.15" font-size="9.3" fill="#111" textLength="13.97" lengthAdjust="spacingAndGlyphs">100</text>
<line x1="698.30" y1="185.85" x2="700.30" y2="185.85" stroke="#111" stroke-width="1"/>
<text x="685.29" y="215.58" font-size="9.3" fill="#111" font-weight="bold" textLength="9.31" lengthAdjust="spacingAndGlyphs">80</text>
<line x1="698.30" y1="212.28" x2="700.30" y2="212.28" stroke="#111" stroke-width="1"/>
<text x="685.29" y="242.01" font-size="9.3" fill="#111" textLength="9.31" lengthAdjust="spacingAndGlyphs">60</text>
<line x1="698.30" y1="238.71" x2="700.30" y2="238.71" stroke="#111" stroke-width="1"/>
<text x="685.29" y="268.44" font-size="9.3" fill="#111" textLength="9.31" lengthAdjust="spacingAndGlyphs">40</text>
<line x1="698.30" y1="265.14" x2="700.30" y2="265.14" stroke="#111" stroke-width="1"/>
<text x="685.29" y="294.87" font-size="9.3" fill="#111" textLength="9.31" lengthAdjust="spacingAndGlyphs">20</text>
<line x1="698.30" y1="291.57" x2="700.30" y2="291.57" stroke="#111" stroke-width="1"/>
<text x="689.94" y="321.30" font-size="9.3" fill="#111" textLength="4.66" lengthAdjust="spacingAndGlyphs">0</text>
<line x1="698.30" y1="318.00" x2="700.30" y2="318.00" stroke="#111" stroke-width="1"/>
<text x="682.50" y="347.73" font-size="9.3" fill="#111" textLength="12.10" lengthAdjust="spacingAndGlyphs">-20</text>
<line x1="698.30" y1="344.43" x2="700.30" y2="344.43" stroke="#111" stroke-width="1"/>
<text x="682.50" y="374.16" font-size="9.3" fill="#111" textLength="12.10" lengthAdjust="spacingAndGlyphs">-40</text>
<line x1="698.30" y1="370.86" x2="700.30" y2="370.86" stroke="#111" stroke-width="1"/>
<text transform="translate(708.70,373.40) rotate(-90)" x="-10.70" y="0" font-size="9.3" fill="#111" textLength="10.70" lengthAdjust="spacingAndGlyphs">R1</text>
<text transform="translate(720.72,373.40) rotate(-90)" x="-10.70" y="0" font-size="9.3" fill="#111" textLength="10.70" lengthAdjust="spacingAndGlyphs">R2</text>
<text transform="translate(732.74,373.40) rotate(-90)" x="-10.70" y="0" font-size="9.3" fill="#111" textLength="10.70" lengthAdjust="spacingAndGlyphs">R3</text>
<text transform="translate(744.76,373.40) rotate(-90)" x="-10.70" y="0" font-size="9.3" fill="#111" textLength="10.70" lengthAdjust="spacingAndGlyphs">R4</text>
<text transform="translate(756.78,373.40) rotate(-90)" x="-10.70" y="0" font-size="9.3" fill="#111" textLength="10.70" lengthAdjust="spacingAndGlyphs">R5</text>
<text transform="translate(768.80,373.40) rotate(-90)" x="-10.70" y="0" font-size="9.3" fill="#111" textLength="10.70" lengthAdjust="spacingAndGlyphs">R6</text>
<text transform="translate(780.82,373.40) rotate(-90)" x="-10.70" y="0" font-size="9.3" fill="#111" textLength="10.70" lengthAdjust="spacingAndGlyphs">R7</text>
<text transform="translate(792.84,373.40) rotate(-90)" x="-10.70" y="0" font-size="9.3" fill="#111" textLength="10.70" lengthAdjust="spacingAndGlyphs">R8</text>
<text transform="translate(804.86,373.40) rotate(-90)" x="-10.70" y="0" font-size="9.3" fill="#111" textLength="10.70" lengthAdjust="spacingAndGlyphs">R9</text>
<text transform="translate(816.88,373.40) rotate(-90)" x="-15.36" y="0" font-size="9.3" fill="#111" textLength="15.36" lengthAdjust="spacingAndGlyphs">R10</text>
<text transform="translate(828.90,373.40) rotate(-90)" x="-14.73" y="0" font-size="9.3" fill="#111" textLength="14.73" lengthAdjust="spacingAndGlyphs">R11</text>
<text transform="translate(840.92,373.40) rotate(-90)" x="-15.36" y="0" font-size="9.3" fill="#111" textLength="15.36" lengthAdjust="spacingAndGlyphs">R12</text>
<text transform="translate(852.94,373.40) rotate(-90)" x="-15.36" y="0" font-size="9.3" fill="#111" textLength="15.36" lengthAdjust="spacingAndGlyphs">R13</text>
<text transform="translate(864.96,373.40) rotate(-90)" x="-15.36" y="0" font-size="9.3" fill="#111" textLength="15.36" lengthAdjust="spacingAndGlyphs">R14</text>
<text transform="translate(889.00,373.40) rotate(-90)" x="-10.70" y="0" font-size="9.3" fill="#111" font-weight="bold" textLength="10.70" lengthAdjust="spacingAndGlyphs">Ra</text>
<rect x="7.50" y="407.00" width="184.00" height="20.00" fill="#e1e1e1" stroke="#adadad" stroke-width="1"/>
<text x="11.20" y="421.20" font-size="11.5" fill="#000" textLength="64.50" lengthAdjust="spacingAndGlyphs">IES TM-30-15</text>
<path d="M179.3 415.2 L183.3 419.2 L187.3 415.2" fill="none" stroke="#444" stroke-width="1"/>
<text x="42.20" y="457.30" font-size="11.8" fill="#000" font-weight="bold" textLength="15.20" lengthAdjust="spacingAndGlyphs">Rf:</text>
<text x="40.90" y="476.70" font-size="11.8" fill="#000" font-weight="bold" textLength="16.50" lengthAdjust="spacingAndGlyphs">Rg:</text>
<text x="23.20" y="496.10" font-size="11.8" fill="#000" font-weight="bold" textLength="34.20" lengthAdjust="spacingAndGlyphs">Rf,skin:</text>
<text x="70.50" y="457.30" font-size="12.2" fill="#e8791c" font-weight="bold" textLength="12.60" lengthAdjust="spacingAndGlyphs">69</text>
<text x="70.80" y="476.70" font-size="11.8" fill="#2a2a2a" textLength="12.00" lengthAdjust="spacingAndGlyphs">94</text>
<text x="70.50" y="496.10" font-size="12.2" fill="#e8791c" font-weight="bold" textLength="12.60" lengthAdjust="spacingAndGlyphs">75</text>
<rect x="11.50" y="520.80" width="91.50" height="50.70" fill="none" stroke="#dcdcdc" stroke-width="1"/>
<rect x="17.50" y="514.30" width="30.60" height="12.00" fill="#f0f0f0"/>
<text x="19.30" y="524.50" font-size="11.5" fill="#000" textLength="26.60" lengthAdjust="spacingAndGlyphs">Show</text>
<circle cx="25.3" cy="540.2" r="5.9" fill="#fff" stroke="#333" stroke-width="1"/>
<circle cx="25.3" cy="540.2" r="3.2" fill="#222"/>
<text x="34.60" y="544.30" font-size="11.5" fill="#000" textLength="61.50" lengthAdjust="spacingAndGlyphs">Chroma + Ri</text>
<circle cx="25.3" cy="559.6" r="5.9" fill="#fff" stroke="#333" stroke-width="1"/>
<text x="34.60" y="563.70" font-size="11.5" fill="#000" textLength="37.50" lengthAdjust="spacingAndGlyphs">Patches</text>
<path d="M18.5 644 L11.5 644 L11.5 593 L103 593 L103 603" fill="none" stroke="#dcdcdc" stroke-width="1"/>
<rect x="17.50" y="586.50" width="45.50" height="12.00" fill="#f0f0f0"/>
<text x="19.40" y="596.80" font-size="11.5" fill="#000" textLength="41.60" lengthAdjust="spacingAndGlyphs">MCAT02</text>
<circle cx="27.9" cy="612.3" r="5.9" fill="#fff" stroke="#333" stroke-width="1"/>
<circle cx="27.9" cy="612.3" r="3.2" fill="#222"/>
<text x="37.20" y="616.40" font-size="11.5" fill="#000" textLength="43.20" lengthAdjust="spacingAndGlyphs">Standard</text>
<circle cx="27.9" cy="631.6" r="5.9" fill="#fff" stroke="#333" stroke-width="1"/>
<text x="37.20" y="635.70" font-size="11.5" fill="#000" textLength="46.80" lengthAdjust="spacingAndGlyphs">Gamut fix</text>
<line x1="145.28" y1="449.80" x2="145.28" y2="597.60" stroke="#b4b4b4" stroke-width="1.1" stroke-opacity="0.85"/>
<line x1="120.60" y1="572.92" x2="268.60" y2="572.92" stroke="#b4b4b4" stroke-width="1.1" stroke-opacity="0.85"/>
<line x1="169.94" y1="449.80" x2="169.94" y2="597.60" stroke="#b4b4b4" stroke-width="1.1" stroke-opacity="0.85"/>
<line x1="120.60" y1="548.26" x2="268.60" y2="548.26" stroke="#b4b4b4" stroke-width="1.1" stroke-opacity="0.85"/>
<line x1="219.26" y1="449.80" x2="219.26" y2="597.60" stroke="#b4b4b4" stroke-width="1.1" stroke-opacity="0.85"/>
<line x1="120.60" y1="498.94" x2="268.60" y2="498.94" stroke="#b4b4b4" stroke-width="1.1" stroke-opacity="0.85"/>
<line x1="243.92" y1="449.80" x2="243.92" y2="597.60" stroke="#b4b4b4" stroke-width="1.1" stroke-opacity="0.85"/>
<line x1="120.60" y1="474.28" x2="268.60" y2="474.28" stroke="#b4b4b4" stroke-width="1.1" stroke-opacity="0.85"/>
<line x1="194.60" y1="449.80" x2="194.60" y2="597.60" stroke="#777" stroke-width="1.2"/>
<line x1="120.60" y1="523.60" x2="268.60" y2="523.60" stroke="#777" stroke-width="1.2"/>
<rect x="120.60" y="449.80" width="148.00" height="147.80" fill="none" stroke="#8a8a8a" stroke-width="1.2"/>
<text x="122.60" y="461.50" font-size="8.8" fill="#111" textLength="40.50" lengthAdjust="spacingAndGlyphs">CAM02UCS</text>
<text x="115.17" y="535.60" font-size="8.2" fill="#333" textLength="10.90" lengthAdjust="spacingAndGlyphs">-30</text>
<text x="182.50" y="600.58" font-size="8.2" fill="#333" textLength="10.90" lengthAdjust="spacingAndGlyphs">-30</text>
<text x="139.83" y="535.60" font-size="8.2" fill="#333" textLength="10.90" lengthAdjust="spacingAndGlyphs">-20</text>
<text x="182.50" y="575.92" font-size="8.2" fill="#333" textLength="10.90" lengthAdjust="spacingAndGlyphs">-20</text>
<text x="164.49" y="535.60" font-size="8.2" fill="#333" textLength="10.90" lengthAdjust="spacingAndGlyphs">-10</text>
<text x="182.50" y="551.26" font-size="8.2" fill="#333" textLength="10.90" lengthAdjust="spacingAndGlyphs">-10</text>
<text x="192.50" y="535.60" font-size="8.2" fill="#333" textLength="4.20" lengthAdjust="spacingAndGlyphs">0</text>
<text x="189.20" y="526.60" font-size="8.2" fill="#333" textLength="4.20" lengthAdjust="spacingAndGlyphs">0</text>
<text x="215.06" y="535.60" font-size="8.2" fill="#333" textLength="8.39" lengthAdjust="spacingAndGlyphs">10</text>
<text x="185.01" y="501.94" font-size="8.2" fill="#333" textLength="8.39" lengthAdjust="spacingAndGlyphs">10</text>
<text x="239.72" y="535.60" font-size="8.2" fill="#333" textLength="8.39" lengthAdjust="spacingAndGlyphs">20</text>
<text x="185.01" y="477.28" font-size="8.2" fill="#333" textLength="8.39" lengthAdjust="spacingAndGlyphs">20</text>
<text x="264.38" y="535.60" font-size="8.2" fill="#333" textLength="8.39" lengthAdjust="spacingAndGlyphs">30</text>
<text x="185.01" y="452.62" font-size="8.2" fill="#333" textLength="8.39" lengthAdjust="spacingAndGlyphs">30</text>
<text x="254.60" y="520.20" font-size="11.5" fill="#222" font-style="italic" textLength="6.00" lengthAdjust="spacingAndGlyphs">a</text>
<text x="260.40" y="514.50" font-size="9" fill="#222" textLength="2.50" lengthAdjust="spacingAndGlyphs">′</text>
<text x="260.40" y="522.50" font-size="7" fill="#444" font-style="italic" textLength="5.60" lengthAdjust="spacingAndGlyphs">M</text>
<text x="199.00" y="594.50" font-size="11.5" fill="#222" font-style="italic" textLength="6.00" lengthAdjust="spacingAndGlyphs">b</text>
<text x="204.60" y="588.60" font-size="9" fill="#222" textLength="2.50" lengthAdjust="spacingAndGlyphs">′</text>
<text x="204.60" y="596.60" font-size="7" fill="#444" font-style="italic" textLength="5.60" lengthAdjust="spacingAndGlyphs">M</text>
<path d="M202.7 468.7 L229.6 468.7 L244.1 488.1 L247.0 511.1 L243.5 532.7 L232.3 551.1 L228.8 569.4 L202.7 560.9 L180.7 582.1 L164.0 566.6 L144.7 550.9 L146.3 528.7 L138.1 515.0 L149.1 495.2 L166.9 481.8 L188.1 476.3 Z" fill="none" stroke="#2020ff" stroke-width="1.3" stroke-linejoin="round" stroke-linecap="round"/>
<circle cx="202.7" cy="468.7" r="2.5" fill="#1010ff"/>
<circle cx="229.6" cy="468.7" r="2.5" fill="#1010ff"/>
<circle cx="244.1" cy="488.1" r="2.5" fill="#1010ff"/>
<circle cx="247.0" cy="511.1" r="2.5" fill="#1010ff"/>
<circle cx="243.5" cy="532.7" r="2.5" fill="#1010ff"/>
<circle cx="232.3" cy="551.1" r="2.5" fill="#1010ff"/>
<circle cx="228.8" cy="569.4" r="2.5" fill="#1010ff"/>
<circle cx="202.7" cy="560.9" r="2.5" fill="#1010ff"/>
<circle cx="180.7" cy="582.1" r="2.5" fill="#1010ff"/>
<circle cx="164.0" cy="566.6" r="2.5" fill="#1010ff"/>
<circle cx="144.7" cy="550.9" r="2.5" fill="#1010ff"/>
<circle cx="146.3" cy="528.7" r="2.5" fill="#1010ff"/>
<circle cx="138.1" cy="515.0" r="2.5" fill="#1010ff"/>
<circle cx="149.1" cy="495.2" r="2.5" fill="#1010ff"/>
<circle cx="166.9" cy="481.8" r="2.5" fill="#1010ff"/>
<circle cx="188.1" cy="476.3" r="2.5" fill="#1010ff"/>
<path d="M193.6 464.1 L215.8 464.1 L235.2 488.1 L237.8 515.8 L238.8 540.5 L227.8 559.0 L228.6 576.8 L204.8 566.6 L190.7 587.8 L176.9 572.1 L157.5 552.5 L153.8 526.0 L144.7 509.5 L152.8 490.8 L165.0 476.1 L182.4 472.2 Z" fill="none" stroke="#ff2020" stroke-width="1.3" stroke-linejoin="round" stroke-linecap="round"/>
<circle cx="193.6" cy="464.1" r="2.5" fill="#ff1010"/>
<circle cx="215.8" cy="464.1" r="2.5" fill="#ff1010"/>
<circle cx="235.2" cy="488.1" r="2.5" fill="#ff1010"/>
<circle cx="237.8" cy="515.8" r="2.5" fill="#ff1010"/>
<circle cx="238.8" cy="540.5" r="2.5" fill="#ff1010"/>
<circle cx="227.8" cy="559.0" r="2.5" fill="#ff1010"/>
<circle cx="228.6" cy="576.8" r="2.5" fill="#ff1010"/>
<circle cx="204.8" cy="566.6" r="2.5" fill="#ff1010"/>
<circle cx="190.7" cy="587.8" r="2.5" fill="#ff1010"/>
<circle cx="176.9" cy="572.1" r="2.5" fill="#ff1010"/>
<circle cx="157.5" cy="552.5" r="2.5" fill="#ff1010"/>
<circle cx="153.8" cy="526.0" r="2.5" fill="#ff1010"/>
<circle cx="144.7" cy="509.5" r="2.5" fill="#ff1010"/>
<circle cx="152.8" cy="490.8" r="2.5" fill="#ff1010"/>
<circle cx="165.0" cy="476.1" r="2.5" fill="#ff1010"/>
<circle cx="182.4" cy="472.2" r="2.5" fill="#ff1010"/>
<text x="132.85" y="612.00" font-size="10.6" fill="#111" textLength="121.50" lengthAdjust="spacingAndGlyphs">Avg. Chromaticity - 16 bins</text>
<text x="169.60" y="622.00" font-size="8.8" fill="#111" textLength="48.00" lengthAdjust="spacingAndGlyphs">(gamut area)</text>
<text x="321.55" y="423.40" font-size="10.6" fill="#111" textLength="138.50" lengthAdjust="spacingAndGlyphs">Color Fidelity by Hue Angle Bin</text>
<line x1="295.80" y1="596.65" x2="491.30" y2="596.65" stroke="#c8c8c8" stroke-width="1.25"/>
<line x1="295.80" y1="578.20" x2="491.30" y2="578.20" stroke="#c8c8c8" stroke-width="1.25"/>
<line x1="295.80" y1="559.75" x2="491.30" y2="559.75" stroke="#c8c8c8" stroke-width="1.25"/>
<line x1="295.80" y1="541.30" x2="491.30" y2="541.30" stroke="#c8c8c8" stroke-width="1.25"/>
<line x1="295.80" y1="522.85" x2="491.30" y2="522.85" stroke="#c8c8c8" stroke-width="1.25"/>
<line x1="295.80" y1="504.40" x2="491.30" y2="504.40" stroke="#c8c8c8" stroke-width="1.25"/>
<line x1="295.80" y1="485.95" x2="491.30" y2="485.95" stroke="#c8c8c8" stroke-width="1.25"/>
<line x1="295.80" y1="467.50" x2="491.30" y2="467.50" stroke="#c8c8c8" stroke-width="1.25"/>
<line x1="295.80" y1="449.05" x2="491.30" y2="449.05" stroke="#c8c8c8" stroke-width="1.25"/>
<rect x="300.70" y="491.43" width="5.60" height="123.67" fill="#a85c74" stroke="#935066" stroke-width="1"/>
<rect x="312.72" y="488.66" width="5.60" height="126.44" fill="#d07c78" stroke="#b76d69" stroke-width="1"/>
<rect x="324.74" y="515.05" width="5.60" height="100.05" fill="#d88c58" stroke="#be7b4d" stroke-width="1"/>
<rect x="336.76" y="494.94" width="5.60" height="120.16" fill="#e0b880" stroke="#c5a170" stroke-width="1"/>
<rect x="348.78" y="476.67" width="5.60" height="138.43" fill="#b0a478" stroke="#9a9069" stroke-width="1"/>
<rect x="360.80" y="465.42" width="5.60" height="149.68" fill="#90a878" stroke="#7e9369" stroke-width="1"/>
<rect x="372.82" y="468.92" width="5.60" height="146.18" fill="#649478" stroke="#588269" stroke-width="1"/>
<rect x="384.84" y="478.33" width="5.60" height="136.77" fill="#88bcb8" stroke="#77a5a1" stroke-width="1"/>
<rect x="396.86" y="476.67" width="5.60" height="138.43" fill="#90bcc8" stroke="#7ea5b0" stroke-width="1"/>
<rect x="408.88" y="510.62" width="5.60" height="104.48" fill="#2c7898" stroke="#266985" stroke-width="1"/>
<rect x="420.90" y="509.51" width="5.60" height="105.59" fill="#5c80b0" stroke="#50709a" stroke-width="1"/>
<rect x="432.92" y="497.52" width="5.60" height="117.58" fill="#8c90d8" stroke="#7b7ebe" stroke-width="1"/>
<rect x="444.94" y="468.37" width="5.60" height="146.73" fill="#9888c0" stroke="#8577a8" stroke-width="1"/>
<rect x="456.96" y="479.07" width="5.60" height="136.03" fill="#9060a8" stroke="#7e5493" stroke-width="1"/>
<rect x="468.98" y="489.40" width="5.60" height="125.70" fill="#986898" stroke="#855b85" stroke-width="1"/>
<rect x="481.00" y="492.17" width="5.60" height="122.93" fill="#c080b0" stroke="#a8709a" stroke-width="1"/>
<rect x="295.80" y="430.60" width="195.50" height="184.50" fill="none" stroke="#2c2c2c" stroke-width="1.45"/>
<text x="287.74" y="618.40" font-size="9.3" fill="#111" textLength="4.66" lengthAdjust="spacingAndGlyphs">0</text>
<line x1="295.80" y1="615.10" x2="297.80" y2="615.10" stroke="#111" stroke-width="1"/>
<text x="283.09" y="599.95" font-size="9.3" fill="#111" textLength="9.31" lengthAdjust="spacingAndGlyphs">10</text>
<line x1="295.80" y1="596.65" x2="297.80" y2="596.65" stroke="#111" stroke-width="1"/>
<text x="283.09" y="581.50" font-size="9.3" fill="#111" textLength="9.31" lengthAdjust="spacingAndGlyphs">20</text>
<line x1="295.80" y1="578.20" x2="297.80" y2="578.20" stroke="#111" stroke-width="1"/>
<text x="283.09" y="563.05" font-size="9.3" fill="#111" textLength="9.31" lengthAdjust="spacingAndGlyphs">30</text>
<line x1="295.80" y1="559.75" x2="297.80" y2="559.75" stroke="#111" stroke-width="1"/>
<text x="283.09" y="544.60" font-size="9.3" fill="#111" textLength="9.31" lengthAdjust="spacingAndGlyphs">40</text>
<line x1="295.80" y1="541.30" x2="297.80" y2="541.30" stroke="#111" stroke-width="1"/>
<text x="283.09" y="526.15" font-size="9.3" fill="#111" textLength="9.31" lengthAdjust="spacingAndGlyphs">50</text>
<line x1="295.80" y1="522.85" x2="297.80" y2="522.85" stroke="#111" stroke-width="1"/>
<text x="283.09" y="507.70" font-size="9.3" fill="#111" textLength="9.31" lengthAdjust="spacingAndGlyphs">60</text>
<line x1="295.80" y1="504.40" x2="297.80" y2="504.40" stroke="#111" stroke-width="1"/>
<text x="283.09" y="489.25" font-size="9.3" fill="#111" textLength="9.31" lengthAdjust="spacingAndGlyphs">70</text>
<line x1="295.80" y1="485.95" x2="297.80" y2="485.95" stroke="#111" stroke-width="1"/>
<text x="283.09" y="470.80" font-size="9.3" fill="#111" font-weight="bold" textLength="9.31" lengthAdjust="spacingAndGlyphs">80</text>
<line x1="295.80" y1="467.50" x2="297.80" y2="467.50" stroke="#111" stroke-width="1"/>
<text x="283.09" y="452.35" font-size="9.3" fill="#111" textLength="9.31" lengthAdjust="spacingAndGlyphs">90</text>
<line x1="295.80" y1="449.05" x2="297.80" y2="449.05" stroke="#111" stroke-width="1"/>
<text x="278.43" y="433.90" font-size="9.3" fill="#111" textLength="13.97" lengthAdjust="spacingAndGlyphs">100</text>
<line x1="295.80" y1="430.60" x2="297.80" y2="430.60" stroke="#111" stroke-width="1"/>
<text transform="translate(307.15,617.80) rotate(-90)" x="-19.08" y="0" font-size="9.3" fill="#111" textLength="19.08" lengthAdjust="spacingAndGlyphs">Bin 1</text>
<text transform="translate(319.15,617.80) rotate(-90)" x="-19.08" y="0" font-size="9.3" fill="#111" textLength="19.08" lengthAdjust="spacingAndGlyphs">Bin 2</text>
<text transform="translate(331.15,617.80) rotate(-90)" x="-19.08" y="0" font-size="9.3" fill="#111" textLength="19.08" lengthAdjust="spacingAndGlyphs">Bin 3</text>
<text transform="translate(343.15,617.80) rotate(-90)" x="-19.08" y="0" font-size="9.3" fill="#111" textLength="19.08" lengthAdjust="spacingAndGlyphs">Bin 4</text>
<text transform="translate(355.15,617.80) rotate(-90)" x="-19.08" y="0" font-size="9.3" fill="#111" textLength="19.08" lengthAdjust="spacingAndGlyphs">Bin 5</text>
<text transform="translate(367.15,617.80) rotate(-90)" x="-19.08" y="0" font-size="9.3" fill="#111" textLength="19.08" lengthAdjust="spacingAndGlyphs">Bin 6</text>
<text transform="translate(379.15,617.80) rotate(-90)" x="-19.08" y="0" font-size="9.3" fill="#111" textLength="19.08" lengthAdjust="spacingAndGlyphs">Bin 7</text>
<text transform="translate(391.15,617.80) rotate(-90)" x="-19.08" y="0" font-size="9.3" fill="#111" textLength="19.08" lengthAdjust="spacingAndGlyphs">Bin 8</text>
<text transform="translate(403.15,617.80) rotate(-90)" x="-19.08" y="0" font-size="9.3" fill="#111" textLength="19.08" lengthAdjust="spacingAndGlyphs">Bin 9</text>
<text transform="translate(415.15,617.80) rotate(-90)" x="-23.73" y="0" font-size="9.3" fill="#111" textLength="23.73" lengthAdjust="spacingAndGlyphs">Bin 10</text>
<text transform="translate(427.15,617.80) rotate(-90)" x="-23.11" y="0" font-size="9.3" fill="#111" textLength="23.11" lengthAdjust="spacingAndGlyphs">Bin 11</text>
<text transform="translate(439.15,617.80) rotate(-90)" x="-23.73" y="0" font-size="9.3" fill="#111" textLength="23.73" lengthAdjust="spacingAndGlyphs">Bin 12</text>
<text transform="translate(451.15,617.80) rotate(-90)" x="-23.73" y="0" font-size="9.3" fill="#111" textLength="23.73" lengthAdjust="spacingAndGlyphs">Bin 13</text>
<text transform="translate(463.15,617.80) rotate(-90)" x="-23.73" y="0" font-size="9.3" fill="#111" textLength="23.73" lengthAdjust="spacingAndGlyphs">Bin 14</text>
<text transform="translate(475.15,617.80) rotate(-90)" x="-23.73" y="0" font-size="9.3" fill="#111" textLength="23.73" lengthAdjust="spacingAndGlyphs">Bin 15</text>
<text transform="translate(487.15,617.80) rotate(-90)" x="-23.73" y="0" font-size="9.3" fill="#111" textLength="23.73" lengthAdjust="spacingAndGlyphs">Bin 16</text>
<line x1="541.60" y1="415.10" x2="541.60" y2="631.00" stroke="#c2c2c2" stroke-width="1.4" stroke-opacity="0.9"/>
<line x1="505.60" y1="451.00" x2="722.30" y2="451.00" stroke="#c2c2c2" stroke-width="1.4" stroke-opacity="0.9"/>
<line x1="577.70" y1="415.10" x2="577.70" y2="631.00" stroke="#c2c2c2" stroke-width="1.4" stroke-opacity="0.9"/>
<line x1="505.60" y1="487.10" x2="722.30" y2="487.10" stroke="#c2c2c2" stroke-width="1.4" stroke-opacity="0.9"/>
<line x1="649.90" y1="415.10" x2="649.90" y2="631.00" stroke="#c2c2c2" stroke-width="1.4" stroke-opacity="0.9"/>
<line x1="505.60" y1="559.30" x2="722.30" y2="559.30" stroke="#c2c2c2" stroke-width="1.4" stroke-opacity="0.9"/>
<line x1="686.00" y1="415.10" x2="686.00" y2="631.00" stroke="#c2c2c2" stroke-width="1.4" stroke-opacity="0.9"/>
<line x1="505.60" y1="595.40" x2="722.30" y2="595.40" stroke="#c2c2c2" stroke-width="1.4" stroke-opacity="0.9"/>
<line x1="613.80" y1="415.10" x2="613.80" y2="631.00" stroke="#777" stroke-width="1.3"/>
<line x1="505.60" y1="523.20" x2="722.30" y2="523.20" stroke="#777" stroke-width="1.3"/>
<line x1="577.70" y1="523.20" x2="577.70" y2="525.70" stroke="#777" stroke-width="1"/>
<line x1="611.30" y1="487.10" x2="613.80" y2="487.10" stroke="#777" stroke-width="1"/>
<line x1="649.90" y1="523.20" x2="649.90" y2="525.70" stroke="#777" stroke-width="1"/>
<line x1="611.30" y1="559.30" x2="613.80" y2="559.30" stroke="#777" stroke-width="1"/>
<rect x="505.60" y="415.10" width="216.70" height="215.90" fill="none" stroke="#8a8a8a" stroke-width="1.2"/>
<text x="567.70" y="426.60" font-size="10.6" fill="#111" textLength="92.00" lengthAdjust="spacingAndGlyphs">Color Vector Graphic</text>
<path d="M605.3 451.4 L625.7 452.4 L653.3 462.9 L673.0 482.1 L684.0 507.1 L685.3 535.2 L671.7 565.9 L657.2 580.7 L631.6 592.2 L598.4 593.5 L572.8 582.5 L551.1 558.7 L542.2 530.6 L542.2 511.5 L552.4 485.4 L574.6 462.4 Z" fill="none" stroke="#1010ff" stroke-width="2.3" stroke-linejoin="round" stroke-linecap="round"/>
<line x1="605.29" y1="451.40" x2="595.83" y2="444.50" stroke="#b0a878" stroke-width="2.0" stroke-linecap="round"/>
<line x1="625.73" y1="452.42" x2="612.45" y2="446.29" stroke="#e0a080" stroke-width="2.0" stroke-linecap="round"/>
<line x1="653.34" y1="462.90" x2="639.28" y2="458.04" stroke="#b08898" stroke-width="2.0" stroke-linecap="round"/>
<line x1="673.01" y1="482.07" x2="661.51" y2="482.32" stroke="#c08080" stroke-width="2.0" stroke-linecap="round"/>
<line x1="684.00" y1="507.11" x2="673.27" y2="512.22" stroke="#a87088" stroke-width="2.0" stroke-linecap="round"/>
<line x1="685.28" y1="535.22" x2="678.12" y2="549.28" stroke="#b080a8" stroke-width="2.0" stroke-linecap="round"/>
<line x1="671.74" y1="565.89" x2="666.11" y2="578.67" stroke="#9878a8" stroke-width="2.0" stroke-linecap="round"/>
<line x1="657.17" y1="580.71" x2="657.17" y2="589.66" stroke="#8878b8" stroke-width="2.0" stroke-linecap="round"/>
<line x1="631.61" y1="592.21" x2="632.89" y2="602.95" stroke="#9890c0" stroke-width="2.0" stroke-linecap="round"/>
<line x1="598.39" y1="593.49" x2="611.17" y2="600.39" stroke="#8080b8" stroke-width="2.0" stroke-linecap="round"/>
<line x1="572.83" y1="582.50" x2="590.72" y2="590.17" stroke="#5878a8" stroke-width="2.0" stroke-linecap="round"/>
<line x1="551.11" y1="558.73" x2="568.49" y2="560.78" stroke="#2c7088" stroke-width="2.0" stroke-linecap="round"/>
<line x1="542.17" y1="530.62" x2="553.67" y2="526.79" stroke="#88b8c0" stroke-width="2.0" stroke-linecap="round"/>
<line x1="542.17" y1="511.46" x2="551.88" y2="505.83" stroke="#88b8b0" stroke-width="2.0" stroke-linecap="round"/>
<line x1="552.39" y1="485.39" x2="557.50" y2="479.51" stroke="#609078" stroke-width="2.0" stroke-linecap="round"/>
<line x1="574.62" y1="462.39" x2="572.83" y2="456.00" stroke="#90a878" stroke-width="2.0" stroke-linecap="round"/>
<path d="M595.8 444.5 L612.4 446.3 L639.3 458.0 L661.5 482.3 L673.3 512.2 L678.1 549.3 L666.1 578.7 L657.2 589.7 L632.9 602.9 L611.2 600.4 L590.7 590.2 L568.5 560.8 L553.7 526.8 L551.9 505.8 L557.5 479.5 L572.8 456.0 Z" fill="none" stroke="#ff1010" stroke-width="2.3" stroke-linejoin="round" stroke-linecap="round"/>
<rect x="754.50" y="416.20" width="133.50" height="213.90" fill="#f0f0f0"/>
<path d="M888.0 523.1 L754.5 416.2 L888.0 416.2 Z" fill="#dadada"/>
<path d="M888.0 523.1 L754.5 630.1 L888.0 630.1 Z" fill="#dadada"/>
<path d="M888.0 523.1 L782.5 416.2 L888.0 416.2 Z" fill="#bfbfbf"/>
<path d="M888.0 523.1 L782.5 630.1 L888.0 630.1 Z" fill="#bfbfbf"/>
<line x1="888.00" y1="523.15" x2="754.50" y2="630.10" stroke="#ffffff" stroke-width="1" stroke-opacity="0.8"/>
<line x1="888.00" y1="523.15" x2="754.50" y2="416.20" stroke="#ffffff" stroke-width="1" stroke-opacity="0.5"/>
<line x1="781.20" y1="416.20" x2="781.20" y2="630.10" stroke="#c6c6c6" stroke-width="1.3" stroke-opacity="0.9"/>
<line x1="807.90" y1="442.94" x2="807.90" y2="603.36" stroke="#c6c6c6" stroke-width="1.3" stroke-opacity="0.9"/>
<line x1="834.60" y1="469.67" x2="834.60" y2="576.62" stroke="#c6c6c6" stroke-width="1.3" stroke-opacity="0.9"/>
<line x1="861.30" y1="496.41" x2="861.30" y2="549.89" stroke="#c6c6c6" stroke-width="1.3" stroke-opacity="0.9"/>
<line x1="754.50" y1="442.94" x2="807.90" y2="442.94" stroke="#c6c6c6" stroke-width="1.3" stroke-opacity="0.9"/>
<line x1="754.50" y1="603.36" x2="807.90" y2="603.36" stroke="#c6c6c6" stroke-width="1.3" stroke-opacity="0.9"/>
<line x1="754.50" y1="469.67" x2="834.60" y2="469.67" stroke="#c6c6c6" stroke-width="1.3" stroke-opacity="0.9"/>
<line x1="754.50" y1="576.62" x2="834.60" y2="576.62" stroke="#c6c6c6" stroke-width="1.3" stroke-opacity="0.9"/>
<line x1="754.50" y1="496.41" x2="861.30" y2="496.41" stroke="#c6c6c6" stroke-width="1.3" stroke-opacity="0.9"/>
<line x1="754.50" y1="549.89" x2="861.30" y2="549.89" stroke="#c6c6c6" stroke-width="1.3" stroke-opacity="0.9"/>
<line x1="754.50" y1="523.15" x2="888.00" y2="523.15" stroke="#c6c6c6" stroke-width="1.3" stroke-opacity="0.9"/>
<circle cx="805.2" cy="540.8" r="2.5" fill="#ff1010"/>
<rect x="754.50" y="416.20" width="133.50" height="213.90" fill="none" stroke="#2c2c2c" stroke-width="1.45"/>
<text x="742.29" y="633.40" font-size="9.3" fill="#111" textLength="9.31" lengthAdjust="spacingAndGlyphs">60</text>
<line x1="754.50" y1="630.10" x2="756.50" y2="630.10" stroke="#111" stroke-width="1"/>
<text x="742.29" y="606.66" font-size="9.3" fill="#111" textLength="9.31" lengthAdjust="spacingAndGlyphs">70</text>
<line x1="754.50" y1="603.36" x2="756.50" y2="603.36" stroke="#111" stroke-width="1"/>
<text x="742.29" y="579.92" font-size="9.3" fill="#111" textLength="9.31" lengthAdjust="spacingAndGlyphs">80</text>
<line x1="754.50" y1="576.62" x2="756.50" y2="576.62" stroke="#111" stroke-width="1"/>
<text x="742.29" y="553.19" font-size="9.3" fill="#111" textLength="9.31" lengthAdjust="spacingAndGlyphs">90</text>
<line x1="754.50" y1="549.89" x2="756.50" y2="549.89" stroke="#111" stroke-width="1"/>
<text x="737.63" y="526.45" font-size="9.3" fill="#111" font-weight="bold" textLength="13.97" lengthAdjust="spacingAndGlyphs">100</text>
<line x1="754.50" y1="523.15" x2="756.50" y2="523.15" stroke="#111" stroke-width="1"/>
<text x="738.26" y="499.71" font-size="9.3" fill="#111" textLength="13.34" lengthAdjust="spacingAndGlyphs">110</text>
<line x1="754.50" y1="496.41" x2="756.50" y2="496.41" stroke="#111" stroke-width="1"/>
<text x="737.63" y="472.97" font-size="9.3" fill="#111" textLength="13.97" lengthAdjust="spacingAndGlyphs">120</text>
<line x1="754.50" y1="469.67" x2="756.50" y2="469.67" stroke="#111" stroke-width="1"/>
<text x="737.63" y="446.24" font-size="9.3" fill="#111" textLength="13.97" lengthAdjust="spacingAndGlyphs">130</text>
<line x1="754.50" y1="442.94" x2="756.50" y2="442.94" stroke="#111" stroke-width="1"/>
<text x="737.63" y="419.50" font-size="9.3" fill="#111" textLength="13.97" lengthAdjust="spacingAndGlyphs">140</text>
<line x1="754.50" y1="416.20" x2="756.50" y2="416.20" stroke="#111" stroke-width="1"/>
<text x="749.34" y="641.30" font-size="9.3" fill="#111" textLength="9.31" lengthAdjust="spacingAndGlyphs">50</text>
<line x1="754.50" y1="627.60" x2="754.50" y2="630.10" stroke="#111" stroke-width="1"/>
<text x="776.04" y="641.30" font-size="9.3" fill="#111" textLength="9.31" lengthAdjust="spacingAndGlyphs">60</text>
<line x1="781.20" y1="627.60" x2="781.20" y2="630.10" stroke="#111" stroke-width="1"/>
<text x="802.74" y="641.30" font-size="9.3" fill="#111" textLength="9.31" lengthAdjust="spacingAndGlyphs">70</text>
<line x1="807.90" y1="627.60" x2="807.90" y2="630.10" stroke="#111" stroke-width="1"/>
<text x="829.44" y="641.30" font-size="9.3" fill="#111" textLength="9.31" lengthAdjust="spacingAndGlyphs">80</text>
<line x1="834.60" y1="627.60" x2="834.60" y2="630.10" stroke="#111" stroke-width="1"/>
<text x="856.14" y="641.30" font-size="9.3" fill="#111" textLength="9.31" lengthAdjust="spacingAndGlyphs">90</text>
<line x1="861.30" y1="627.60" x2="861.30" y2="630.10" stroke="#111" stroke-width="1"/>
<text x="880.52" y="641.30" font-size="9.3" fill="#111" textLength="13.97" lengthAdjust="spacingAndGlyphs">100</text>
<line x1="888.00" y1="627.60" x2="888.00" y2="630.10" stroke="#111" stroke-width="1"/>
<text x="761.00" y="427.20" font-size="10.6" fill="#111" font-weight="bold" textLength="13.60" lengthAdjust="spacingAndGlyphs">Rg</text>
<text x="873.60" y="625.00" font-size="10.6" fill="#111" font-weight="bold" textLength="12.20" lengthAdjust="spacingAndGlyphs">Rf</text>
<text x="407.75" y="663.20" font-size="10.6" fill="#111" textLength="108.50" lengthAdjust="spacingAndGlyphs">Color Fidelity by Sample</text>
<line x1="39.50" y1="837.03" x2="887.50" y2="837.03" stroke="#c8c8c8" stroke-width="1.25"/>
<line x1="39.50" y1="818.56" x2="887.50" y2="818.56" stroke="#c8c8c8" stroke-width="1.25"/>
<line x1="39.50" y1="800.09" x2="887.50" y2="800.09" stroke="#c8c8c8" stroke-width="1.25"/>
<line x1="39.50" y1="781.62" x2="887.50" y2="781.62" stroke="#c8c8c8" stroke-width="1.25"/>
<line x1="39.50" y1="763.15" x2="887.50" y2="763.15" stroke="#c8c8c8" stroke-width="1.25"/>
<line x1="39.50" y1="744.68" x2="887.50" y2="744.68" stroke="#c8c8c8" stroke-width="1.25"/>
<line x1="39.50" y1="726.21" x2="887.50" y2="726.21" stroke="#c8c8c8" stroke-width="1.25"/>
<line x1="39.50" y1="707.74" x2="887.50" y2="707.74" stroke="#c8c8c8" stroke-width="1.25"/>
<line x1="39.50" y1="689.27" x2="887.50" y2="689.27" stroke="#c8c8c8" stroke-width="1.25"/>
<rect x="41.50" y="704.55" width="5.10" height="150.95" fill="#f4b8c8" stroke="#d6a1b0" stroke-width="1"/>
<line x1="39.90" y1="855.50" x2="39.90" y2="858.50" stroke="#111" stroke-width="1.2"/>
<text transform="translate(47.25,862.20) rotate(-90)" x="-23.00" y="0" font-size="8.6" fill="#111" textLength="23.00" lengthAdjust="spacingAndGlyphs">CES01</text>
<rect x="49.81" y="736.31" width="5.10" height="119.19" fill="#d05878" stroke="#b74d69" stroke-width="1"/>
<line x1="48.21" y1="855.50" x2="48.21" y2="858.50" stroke="#111" stroke-width="1.2"/>
<rect x="58.12" y="717.48" width="5.10" height="138.03" fill="#583038" stroke="#4d2a31" stroke-width="1"/>
<line x1="56.52" y1="855.50" x2="56.52" y2="858.50" stroke="#111" stroke-width="1.2"/>
<text transform="translate(63.87,862.20) rotate(-90)" x="-23.00" y="0" font-size="8.6" fill="#111" textLength="23.00" lengthAdjust="spacingAndGlyphs">CES03</text>
<rect x="66.43" y="723.02" width="5.10" height="132.48" fill="#d08890" stroke="#b7777e" stroke-width="1"/>
<line x1="64.83" y1="855.50" x2="64.83" y2="858.50" stroke="#111" stroke-width="1.2"/>
<rect x="74.74" y="771.04" width="5.10" height="84.46" fill="#b83850" stroke="#a13146" stroke-width="1"/>
<line x1="73.14" y1="855.50" x2="73.14" y2="858.50" stroke="#111" stroke-width="1.2"/>
<text transform="translate(80.49,862.20) rotate(-90)" x="-23.00" y="0" font-size="8.6" fill="#111" textLength="23.00" lengthAdjust="spacingAndGlyphs">CES05</text>
<rect x="83.06" y="724.12" width="5.10" height="131.38" fill="#905c60" stroke="#7e5054" stroke-width="1"/>
<line x1="81.46" y1="855.50" x2="81.46" y2="858.50" stroke="#111" stroke-width="1.2"/>
<rect x="91.37" y="758.11" width="5.10" height="97.39" fill="#a02c44" stroke="#8c263b" stroke-width="1"/>
<line x1="89.77" y1="855.50" x2="89.77" y2="858.50" stroke="#111" stroke-width="1.2"/>
<text transform="translate(97.12,862.20) rotate(-90)" x="-23.00" y="0" font-size="8.6" fill="#111" textLength="23.00" lengthAdjust="spacingAndGlyphs">CES07</text>
<rect x="99.68" y="767.34" width="5.10" height="88.16" fill="#98303c" stroke="#852a34" stroke-width="1"/>
<line x1="98.08" y1="855.50" x2="98.08" y2="858.50" stroke="#111" stroke-width="1.2"/>
<rect x="107.99" y="679.61" width="5.10" height="175.89" fill="#403838" stroke="#383131" stroke-width="1"/>
<line x1="106.39" y1="855.50" x2="106.39" y2="858.50" stroke="#111" stroke-width="1.2"/>
<text transform="translate(113.74,862.20) rotate(-90)" x="-23.00" y="0" font-size="8.6" fill="#111" textLength="23.00" lengthAdjust="spacingAndGlyphs">CES09</text>
<rect x="116.30" y="738.53" width="5.10" height="116.97" fill="#f88070" stroke="#da7062" stroke-width="1"/>
<line x1="114.70" y1="855.50" x2="114.70" y2="858.50" stroke="#111" stroke-width="1.2"/>
<rect x="124.61" y="744.26" width="5.10" height="111.24" fill="#c85c48" stroke="#b0503f" stroke-width="1"/>
<line x1="123.01" y1="855.50" x2="123.01" y2="858.50" stroke="#111" stroke-width="1.2"/>
<text transform="translate(130.36,862.20) rotate(-90)" x="-23.00" y="0" font-size="8.6" fill="#111" textLength="23.00" lengthAdjust="spacingAndGlyphs">CES11</text>
<rect x="132.92" y="751.83" width="5.10" height="103.67" fill="#e06850" stroke="#c55b46" stroke-width="1"/>
<line x1="131.32" y1="855.50" x2="131.32" y2="858.50" stroke="#111" stroke-width="1.2"/>
<rect x="141.23" y="731.33" width="5.10" height="124.17" fill="#80483c" stroke="#703f34" stroke-width="1"/>
<line x1="139.63" y1="855.50" x2="139.63" y2="858.50" stroke="#111" stroke-width="1.2"/>
<text transform="translate(146.98,862.20) rotate(-90)" x="-23.00" y="0" font-size="8.6" fill="#111" textLength="23.00" lengthAdjust="spacingAndGlyphs">CES13</text>
<rect x="149.54" y="695.50" width="5.10" height="160.00" fill="#b8a098" stroke="#a18c85" stroke-width="1"/>
<line x1="147.94" y1="855.50" x2="147.94" y2="858.50" stroke="#111" stroke-width="1.2"/>
<rect x="157.85" y="713.04" width="5.10" height="142.46" fill="#c89888" stroke="#b08577" stroke-width="1"/>
<line x1="156.25" y1="855.50" x2="156.25" y2="858.50" stroke="#111" stroke-width="1.2"/>
<text transform="translate(163.60,862.20) rotate(-90)" x="-23.00" y="0" font-size="8.6" fill="#111" textLength="23.00" lengthAdjust="spacingAndGlyphs">CES15</text>
<rect x="166.16" y="756.45" width="5.10" height="99.05" fill="#8c5840" stroke="#7b4d38" stroke-width="1"/>
<line x1="164.56" y1="855.50" x2="164.56" y2="858.50" stroke="#111" stroke-width="1.2"/>
<rect x="174.48" y="742.59" width="5.10" height="112.91" fill="#8c5c40" stroke="#7b5038" stroke-width="1"/>
<line x1="172.88" y1="855.50" x2="172.88" y2="858.50" stroke="#111" stroke-width="1.2"/>
<text transform="translate(180.23,862.20) rotate(-90)" x="-23.00" y="0" font-size="8.6" fill="#111" textLength="23.00" lengthAdjust="spacingAndGlyphs">CES17</text>
<rect x="182.79" y="722.28" width="5.10" height="133.22" fill="#987058" stroke="#85624d" stroke-width="1"/>
<line x1="181.19" y1="855.50" x2="181.19" y2="858.50" stroke="#111" stroke-width="1.2"/>
<rect x="191.10" y="747.03" width="5.10" height="108.47" fill="#d09050" stroke="#b77e46" stroke-width="1"/>
<line x1="189.50" y1="855.50" x2="189.50" y2="858.50" stroke="#111" stroke-width="1.2"/>
<text transform="translate(196.85,862.20) rotate(-90)" x="-23.00" y="0" font-size="8.6" fill="#111" textLength="23.00" lengthAdjust="spacingAndGlyphs">CES19</text>
<rect x="199.41" y="787.48" width="5.10" height="68.02" fill="#d88030" stroke="#be702a" stroke-width="1"/>
<line x1="197.81" y1="855.50" x2="197.81" y2="858.50" stroke="#111" stroke-width="1.2"/>
<rect x="207.72" y="765.50" width="5.10" height="90.00" fill="#f8b860" stroke="#daa154" stroke-width="1"/>
<line x1="206.12" y1="855.50" x2="206.12" y2="858.50" stroke="#111" stroke-width="1.2"/>
<text transform="translate(213.47,862.20) rotate(-90)" x="-23.00" y="0" font-size="8.6" fill="#111" textLength="23.00" lengthAdjust="spacingAndGlyphs">CES21</text>
<rect x="216.03" y="764.57" width="5.10" height="90.93" fill="#f0a048" stroke="#d38c3f" stroke-width="1"/>
<line x1="214.43" y1="855.50" x2="214.43" y2="858.50" stroke="#111" stroke-width="1.2"/>
<rect x="224.34" y="709.35" width="5.10" height="146.15" fill="#f0dcb0" stroke="#d3c19a" stroke-width="1"/>
<line x1="222.74" y1="855.50" x2="222.74" y2="858.50" stroke="#111" stroke-width="1.2"/>
<text transform="translate(230.09,862.20) rotate(-90)" x="-23.00" y="0" font-size="8.6" fill="#111" textLength="23.00" lengthAdjust="spacingAndGlyphs">CES23</text>
<rect x="232.65" y="747.03" width="5.10" height="108.47" fill="#fcd480" stroke="#ddba70" stroke-width="1"/>
<line x1="231.05" y1="855.50" x2="231.05" y2="858.50" stroke="#111" stroke-width="1.2"/>
<rect x="240.96" y="770.11" width="5.10" height="85.39" fill="#d09c20" stroke="#b7891c" stroke-width="1"/>
<line x1="239.36" y1="855.50" x2="239.36" y2="858.50" stroke="#111" stroke-width="1.2"/>
<text transform="translate(246.71,862.20) rotate(-90)" x="-23.00" y="0" font-size="8.6" fill="#111" textLength="23.00" lengthAdjust="spacingAndGlyphs">CES25</text>
<rect x="249.28" y="756.26" width="5.10" height="99.24" fill="#fcd070" stroke="#ddb762" stroke-width="1"/>
<line x1="247.68" y1="855.50" x2="247.68" y2="858.50" stroke="#111" stroke-width="1.2"/>
<rect x="257.59" y="702.51" width="5.10" height="152.99" fill="#b0a478" stroke="#9a9069" stroke-width="1"/>
<line x1="255.99" y1="855.50" x2="255.99" y2="858.50" stroke="#111" stroke-width="1.2"/>
<text transform="translate(263.34,862.20) rotate(-90)" x="-23.00" y="0" font-size="8.6" fill="#111" textLength="23.00" lengthAdjust="spacingAndGlyphs">CES27</text>
<rect x="265.90" y="714.70" width="5.10" height="140.80" fill="#686034" stroke="#5b542d" stroke-width="1"/>
<line x1="264.30" y1="855.50" x2="264.30" y2="858.50" stroke="#111" stroke-width="1.2"/>
<rect x="274.21" y="754.97" width="5.10" height="100.53" fill="#f0d468" stroke="#d3ba5b" stroke-width="1"/>
<line x1="272.61" y1="855.50" x2="272.61" y2="858.50" stroke="#111" stroke-width="1.2"/>
<text transform="translate(279.96,862.20) rotate(-90)" x="-23.00" y="0" font-size="8.6" fill="#111" textLength="23.00" lengthAdjust="spacingAndGlyphs">CES29</text>
<rect x="282.52" y="726.71" width="5.10" height="128.79" fill="#a09060" stroke="#8c7e54" stroke-width="1"/>
<line x1="280.92" y1="855.50" x2="280.92" y2="858.50" stroke="#111" stroke-width="1.2"/>
<rect x="290.83" y="745.18" width="5.10" height="110.32" fill="#ecd468" stroke="#cfba5b" stroke-width="1"/>
<line x1="289.23" y1="855.50" x2="289.23" y2="858.50" stroke="#111" stroke-width="1.2"/>
<text transform="translate(296.58,862.20) rotate(-90)" x="-23.00" y="0" font-size="8.6" fill="#111" textLength="23.00" lengthAdjust="spacingAndGlyphs">CES31</text>
<rect x="299.14" y="758.85" width="5.10" height="96.65" fill="#c4a830" stroke="#ac932a" stroke-width="1"/>
<line x1="297.54" y1="855.50" x2="297.54" y2="858.50" stroke="#111" stroke-width="1.2"/>
<rect x="307.45" y="730.59" width="5.10" height="124.91" fill="#e8dc98" stroke="#ccc185" stroke-width="1"/>
<line x1="305.85" y1="855.50" x2="305.85" y2="858.50" stroke="#111" stroke-width="1.2"/>
<text transform="translate(313.20,862.20) rotate(-90)" x="-23.00" y="0" font-size="8.6" fill="#111" textLength="23.00" lengthAdjust="spacingAndGlyphs">CES33</text>
<rect x="315.76" y="739.45" width="5.10" height="116.05" fill="#98902c" stroke="#857e26" stroke-width="1"/>
<line x1="314.16" y1="855.50" x2="314.16" y2="858.50" stroke="#111" stroke-width="1.2"/>
<rect x="324.07" y="708.98" width="5.10" height="146.52" fill="#646438" stroke="#585831" stroke-width="1"/>
<line x1="322.47" y1="855.50" x2="322.47" y2="858.50" stroke="#111" stroke-width="1.2"/>
<text transform="translate(329.82,862.20) rotate(-90)" x="-23.00" y="0" font-size="8.6" fill="#111" textLength="23.00" lengthAdjust="spacingAndGlyphs">CES35</text>
<rect x="332.38" y="674.81" width="5.10" height="180.69" fill="#c4c0a8" stroke="#aca893" stroke-width="1"/>
<line x1="330.78" y1="855.50" x2="330.78" y2="858.50" stroke="#111" stroke-width="1.2"/>
<rect x="340.70" y="723.02" width="5.10" height="132.48" fill="#687038" stroke="#5b6231" stroke-width="1"/>
<line x1="339.10" y1="855.50" x2="339.10" y2="858.50" stroke="#111" stroke-width="1.2"/>
<text transform="translate(346.45,862.20) rotate(-90)" x="-23.00" y="0" font-size="8.6" fill="#111" textLength="23.00" lengthAdjust="spacingAndGlyphs">CES37</text>
<rect x="349.01" y="707.32" width="5.10" height="148.18" fill="#d4d8a0" stroke="#babe8c" stroke-width="1"/>
<line x1="347.41" y1="855.50" x2="347.41" y2="858.50" stroke="#111" stroke-width="1.2"/>
<rect x="357.32" y="681.46" width="5.10" height="174.04" fill="#4c5040" stroke="#424638" stroke-width="1"/>
<line x1="355.72" y1="855.50" x2="355.72" y2="858.50" stroke="#111" stroke-width="1.2"/>
<text transform="translate(363.07,862.20) rotate(-90)" x="-23.00" y="0" font-size="8.6" fill="#111" textLength="23.00" lengthAdjust="spacingAndGlyphs">CES39</text>
<rect x="365.63" y="693.46" width="5.10" height="162.04" fill="#6c7850" stroke="#5f6946" stroke-width="1"/>
<line x1="364.03" y1="855.50" x2="364.03" y2="858.50" stroke="#111" stroke-width="1.2"/>
<rect x="373.94" y="692.54" width="5.10" height="162.96" fill="#d4dcc0" stroke="#bac1a8" stroke-width="1"/>
<line x1="372.34" y1="855.50" x2="372.34" y2="858.50" stroke="#111" stroke-width="1.2"/>
<text transform="translate(379.69,862.20) rotate(-90)" x="-23.00" y="0" font-size="8.6" fill="#111" textLength="23.00" lengthAdjust="spacingAndGlyphs">CES41</text>
<rect x="382.25" y="719.32" width="5.10" height="136.18" fill="#80b840" stroke="#70a138" stroke-width="1"/>
<line x1="380.65" y1="855.50" x2="380.65" y2="858.50" stroke="#111" stroke-width="1.2"/>
<rect x="390.56" y="723.75" width="5.10" height="131.75" fill="#88bc40" stroke="#77a538" stroke-width="1"/>
<line x1="388.96" y1="855.50" x2="388.96" y2="858.50" stroke="#111" stroke-width="1.2"/>
<text transform="translate(396.31,862.20) rotate(-90)" x="-23.00" y="0" font-size="8.6" fill="#111" textLength="23.00" lengthAdjust="spacingAndGlyphs">CES43</text>
<rect x="398.87" y="673.52" width="5.10" height="181.98" fill="#3c3c3c" stroke="#343434" stroke-width="1"/>
<line x1="397.27" y1="855.50" x2="397.27" y2="858.50" stroke="#111" stroke-width="1.2"/>
<rect x="407.18" y="707.32" width="5.10" height="148.18" fill="#589850" stroke="#4d8546" stroke-width="1"/>
<line x1="405.58" y1="855.50" x2="405.58" y2="858.50" stroke="#111" stroke-width="1.2"/>
<text transform="translate(412.93,862.20) rotate(-90)" x="-23.00" y="0" font-size="8.6" fill="#111" textLength="23.00" lengthAdjust="spacingAndGlyphs">CES45</text>
<rect x="415.50" y="711.75" width="5.10" height="143.75" fill="#78a870" stroke="#699362" stroke-width="1"/>
<line x1="413.89" y1="855.50" x2="413.89" y2="858.50" stroke="#111" stroke-width="1.2"/>
<rect x="423.81" y="710.83" width="5.10" height="144.67" fill="#90a888" stroke="#7e9377" stroke-width="1"/>
<line x1="422.21" y1="855.50" x2="422.21" y2="858.50" stroke="#111" stroke-width="1.2"/>
<text transform="translate(429.56,862.20) rotate(-90)" x="-23.00" y="0" font-size="8.6" fill="#111" textLength="23.00" lengthAdjust="spacingAndGlyphs">CES47</text>
<rect x="432.12" y="729.48" width="5.10" height="126.02" fill="#80c890" stroke="#70b07e" stroke-width="1"/>
<line x1="430.52" y1="855.50" x2="430.52" y2="858.50" stroke="#111" stroke-width="1.2"/>
<rect x="440.43" y="716.55" width="5.10" height="138.95" fill="#407c48" stroke="#386d3f" stroke-width="1"/>
<line x1="438.83" y1="855.50" x2="438.83" y2="858.50" stroke="#111" stroke-width="1.2"/>
<text transform="translate(446.18,862.20) rotate(-90)" x="-23.00" y="0" font-size="8.6" fill="#111" textLength="23.00" lengthAdjust="spacingAndGlyphs">CES49</text>
<rect x="448.74" y="701.78" width="5.10" height="153.72" fill="#589070" stroke="#4d7e62" stroke-width="1"/>
<line x1="447.14" y1="855.50" x2="447.14" y2="858.50" stroke="#111" stroke-width="1.2"/>
<rect x="457.05" y="699.00" width="5.10" height="156.50" fill="#68947c" stroke="#5b826d" stroke-width="1"/>
<line x1="455.45" y1="855.50" x2="455.45" y2="858.50" stroke="#111" stroke-width="1.2"/>
<text transform="translate(462.80,862.20) rotate(-90)" x="-23.00" y="0" font-size="8.6" fill="#111" textLength="23.00" lengthAdjust="spacingAndGlyphs">CES51</text>
<rect x="465.36" y="700.11" width="5.10" height="155.39" fill="#1c6c4c" stroke="#185f42" stroke-width="1"/>
<line x1="463.76" y1="855.50" x2="463.76" y2="858.50" stroke="#111" stroke-width="1.2"/>
<rect x="473.67" y="727.45" width="5.10" height="128.05" fill="#008c64" stroke="#007b58" stroke-width="1"/>
<line x1="472.07" y1="855.50" x2="472.07" y2="858.50" stroke="#111" stroke-width="1.2"/>
<text transform="translate(479.42,862.20) rotate(-90)" x="-23.00" y="0" font-size="8.6" fill="#111" textLength="23.00" lengthAdjust="spacingAndGlyphs">CES53</text>
<rect x="481.98" y="710.46" width="5.10" height="145.04" fill="#acdcd0" stroke="#97c1b7" stroke-width="1"/>
<line x1="480.38" y1="855.50" x2="480.38" y2="858.50" stroke="#111" stroke-width="1.2"/>
<rect x="490.29" y="712.86" width="5.10" height="142.64" fill="#a0d8cc" stroke="#8cbeb3" stroke-width="1"/>
<line x1="488.69" y1="855.50" x2="488.69" y2="858.50" stroke="#111" stroke-width="1.2"/>
<text transform="translate(496.04,862.20) rotate(-90)" x="-23.00" y="0" font-size="8.6" fill="#111" textLength="23.00" lengthAdjust="spacingAndGlyphs">CES55</text>
<rect x="498.61" y="737.79" width="5.10" height="117.71" fill="#20c0ac" stroke="#1ca897" stroke-width="1"/>
<line x1="497.00" y1="855.50" x2="497.00" y2="858.50" stroke="#111" stroke-width="1.2"/>
<rect x="506.92" y="740.56" width="5.10" height="114.94" fill="#10a890" stroke="#0e937e" stroke-width="1"/>
<line x1="505.32" y1="855.50" x2="505.32" y2="858.50" stroke="#111" stroke-width="1.2"/>
<text transform="translate(512.67,862.20) rotate(-90)" x="-23.00" y="0" font-size="8.6" fill="#111" textLength="23.00" lengthAdjust="spacingAndGlyphs">CES57</text>
<rect x="515.23" y="737.79" width="5.10" height="117.71" fill="#089880" stroke="#078570" stroke-width="1"/>
<line x1="513.63" y1="855.50" x2="513.63" y2="858.50" stroke="#111" stroke-width="1.2"/>
<rect x="523.54" y="703.62" width="5.10" height="151.88" fill="#b4e0dc" stroke="#9ec5c1" stroke-width="1"/>
<line x1="521.94" y1="855.50" x2="521.94" y2="858.50" stroke="#111" stroke-width="1.2"/>
<text transform="translate(529.29,862.20) rotate(-90)" x="-23.00" y="0" font-size="8.6" fill="#111" textLength="23.00" lengthAdjust="spacingAndGlyphs">CES59</text>
<rect x="531.85" y="692.54" width="5.10" height="162.96" fill="#ccdcd8" stroke="#b3c1be" stroke-width="1"/>
<line x1="530.25" y1="855.50" x2="530.25" y2="858.50" stroke="#111" stroke-width="1.2"/>
<rect x="540.16" y="706.58" width="5.10" height="148.92" fill="#98bcb8" stroke="#85a5a1" stroke-width="1"/>
<line x1="538.56" y1="855.50" x2="538.56" y2="858.50" stroke="#111" stroke-width="1.2"/>
<text transform="translate(545.91,862.20) rotate(-90)" x="-23.00" y="0" font-size="8.6" fill="#111" textLength="23.00" lengthAdjust="spacingAndGlyphs">CES61</text>
<rect x="548.47" y="704.55" width="5.10" height="150.95" fill="#909c9c" stroke="#7e8989" stroke-width="1"/>
<line x1="546.87" y1="855.50" x2="546.87" y2="858.50" stroke="#111" stroke-width="1.2"/>
<rect x="556.78" y="731.33" width="5.10" height="124.17" fill="#44484c" stroke="#3b3f42" stroke-width="1"/>
<line x1="555.18" y1="855.50" x2="555.18" y2="858.50" stroke="#111" stroke-width="1.2"/>
<text transform="translate(562.53,862.20) rotate(-90)" x="-23.00" y="0" font-size="8.6" fill="#111" textLength="23.00" lengthAdjust="spacingAndGlyphs">CES63</text>
<rect x="565.09" y="745.73" width="5.10" height="109.77" fill="#0098a8" stroke="#008593" stroke-width="1"/>
<line x1="563.49" y1="855.50" x2="563.49" y2="858.50" stroke="#111" stroke-width="1.2"/>
<rect x="573.40" y="754.60" width="5.10" height="100.90" fill="#206470" stroke="#1c5862" stroke-width="1"/>
<line x1="571.80" y1="855.50" x2="571.80" y2="858.50" stroke="#111" stroke-width="1.2"/>
<text transform="translate(579.15,862.20) rotate(-90)" x="-23.00" y="0" font-size="8.6" fill="#111" textLength="23.00" lengthAdjust="spacingAndGlyphs">CES65</text>
<rect x="581.72" y="761.80" width="5.10" height="93.70" fill="#087088" stroke="#076277" stroke-width="1"/>
<line x1="580.12" y1="855.50" x2="580.12" y2="858.50" stroke="#111" stroke-width="1.2"/>
<rect x="590.03" y="767.34" width="5.10" height="88.16" fill="#08789c" stroke="#076989" stroke-width="1"/>
<line x1="588.43" y1="855.50" x2="588.43" y2="858.50" stroke="#111" stroke-width="1.2"/>
<text transform="translate(595.78,862.20) rotate(-90)" x="-23.00" y="0" font-size="8.6" fill="#111" textLength="23.00" lengthAdjust="spacingAndGlyphs">CES67</text>
<rect x="598.34" y="745.73" width="5.10" height="109.77" fill="#5c9cb4" stroke="#50899e" stroke-width="1"/>
<line x1="596.74" y1="855.50" x2="596.74" y2="858.50" stroke="#111" stroke-width="1.2"/>
<rect x="606.65" y="725.79" width="5.10" height="129.71" fill="#6c7c8c" stroke="#5f6d7b" stroke-width="1"/>
<line x1="605.05" y1="855.50" x2="605.05" y2="858.50" stroke="#111" stroke-width="1.2"/>
<text transform="translate(612.40,862.20) rotate(-90)" x="-23.00" y="0" font-size="8.6" fill="#111" textLength="23.00" lengthAdjust="spacingAndGlyphs">CES69</text>
<rect x="614.96" y="766.61" width="5.10" height="88.89" fill="#78b4e0" stroke="#699ec5" stroke-width="1"/>
<line x1="613.36" y1="855.50" x2="613.36" y2="858.50" stroke="#111" stroke-width="1.2"/>
<rect x="623.27" y="779.53" width="5.10" height="75.97" fill="#1c4c78" stroke="#184269" stroke-width="1"/>
<line x1="621.67" y1="855.50" x2="621.67" y2="858.50" stroke="#111" stroke-width="1.2"/>
<text transform="translate(629.02,862.20) rotate(-90)" x="-23.00" y="0" font-size="8.6" fill="#111" textLength="23.00" lengthAdjust="spacingAndGlyphs">CES71</text>
<rect x="631.58" y="707.32" width="5.10" height="148.18" fill="#a8b4c0" stroke="#939ea8" stroke-width="1"/>
<line x1="629.98" y1="855.50" x2="629.98" y2="858.50" stroke="#111" stroke-width="1.2"/>
<rect x="639.89" y="786.74" width="5.10" height="68.76" fill="#2088c8" stroke="#1c77b0" stroke-width="1"/>
<line x1="638.29" y1="855.50" x2="638.29" y2="858.50" stroke="#111" stroke-width="1.2"/>
<text transform="translate(645.64,862.20) rotate(-90)" x="-23.00" y="0" font-size="8.6" fill="#111" textLength="23.00" lengthAdjust="spacingAndGlyphs">CES73</text>
<rect x="648.20" y="684.23" width="5.10" height="171.27" fill="#3c3c40" stroke="#343438" stroke-width="1"/>
<line x1="646.60" y1="855.50" x2="646.60" y2="858.50" stroke="#111" stroke-width="1.2"/>
<rect x="656.51" y="778.61" width="5.10" height="76.89" fill="#244874" stroke="#1f3f66" stroke-width="1"/>
<line x1="654.91" y1="855.50" x2="654.91" y2="858.50" stroke="#111" stroke-width="1.2"/>
<text transform="translate(662.26,862.20) rotate(-90)" x="-23.00" y="0" font-size="8.6" fill="#111" textLength="23.00" lengthAdjust="spacingAndGlyphs">CES75</text>
<rect x="664.83" y="783.04" width="5.10" height="72.46" fill="#3068b8" stroke="#2a5ba1" stroke-width="1"/>
<line x1="663.23" y1="855.50" x2="663.23" y2="858.50" stroke="#111" stroke-width="1.2"/>
<rect x="673.14" y="740.56" width="5.10" height="114.94" fill="#4c6494" stroke="#425882" stroke-width="1"/>
<line x1="671.54" y1="855.50" x2="671.54" y2="858.50" stroke="#111" stroke-width="1.2"/>
<text transform="translate(678.89,862.20) rotate(-90)" x="-23.00" y="0" font-size="8.6" fill="#111" textLength="23.00" lengthAdjust="spacingAndGlyphs">CES77</text>
<rect x="681.45" y="774.73" width="5.10" height="80.77" fill="#3060b0" stroke="#2a549a" stroke-width="1"/>
<line x1="679.85" y1="855.50" x2="679.85" y2="858.50" stroke="#111" stroke-width="1.2"/>
<rect x="689.76" y="716.55" width="5.10" height="138.95" fill="#a0a8d8" stroke="#8c93be" stroke-width="1"/>
<line x1="688.16" y1="855.50" x2="688.16" y2="858.50" stroke="#111" stroke-width="1.2"/>
<text transform="translate(695.51,862.20) rotate(-90)" x="-23.00" y="0" font-size="8.6" fill="#111" textLength="23.00" lengthAdjust="spacingAndGlyphs">CES79</text>
<rect x="698.07" y="722.09" width="5.10" height="133.41" fill="#9490cc" stroke="#827eb3" stroke-width="1"/>
<line x1="696.47" y1="855.50" x2="696.47" y2="858.50" stroke="#111" stroke-width="1.2"/>
<rect x="706.38" y="719.32" width="5.10" height="136.18" fill="#5c4c9c" stroke="#504289" stroke-width="1"/>
<line x1="704.78" y1="855.50" x2="704.78" y2="858.50" stroke="#111" stroke-width="1.2"/>
<text transform="translate(712.13,862.20) rotate(-90)" x="-23.00" y="0" font-size="8.6" fill="#111" textLength="23.00" lengthAdjust="spacingAndGlyphs">CES81</text>
<rect x="714.69" y="692.54" width="5.10" height="162.96" fill="#d4d0e8" stroke="#bab7cc" stroke-width="1"/>
<line x1="713.09" y1="855.50" x2="713.09" y2="858.50" stroke="#111" stroke-width="1.2"/>
<rect x="723.00" y="698.08" width="5.10" height="157.42" fill="#b0a8d4" stroke="#9a93ba" stroke-width="1"/>
<line x1="721.40" y1="855.50" x2="721.40" y2="858.50" stroke="#111" stroke-width="1.2"/>
<text transform="translate(728.75,862.20) rotate(-90)" x="-23.00" y="0" font-size="8.6" fill="#111" textLength="23.00" lengthAdjust="spacingAndGlyphs">CES83</text>
<rect x="731.31" y="700.85" width="5.10" height="154.65" fill="#3c3440" stroke="#342d38" stroke-width="1"/>
<line x1="729.71" y1="855.50" x2="729.71" y2="858.50" stroke="#111" stroke-width="1.2"/>
<rect x="739.62" y="711.75" width="5.10" height="143.75" fill="#645474" stroke="#584966" stroke-width="1"/>
<line x1="738.02" y1="855.50" x2="738.02" y2="858.50" stroke="#111" stroke-width="1.2"/>
<text transform="translate(745.37,862.20) rotate(-90)" x="-23.00" y="0" font-size="8.6" fill="#111" textLength="23.00" lengthAdjust="spacingAndGlyphs">CES85</text>
<rect x="747.93" y="724.86" width="5.10" height="130.64" fill="#a888c8" stroke="#9377b0" stroke-width="1"/>
<line x1="746.33" y1="855.50" x2="746.33" y2="858.50" stroke="#111" stroke-width="1.2"/>
<rect x="756.25" y="720.98" width="5.10" height="134.52" fill="#683c84" stroke="#5b3474" stroke-width="1"/>
<line x1="754.65" y1="855.50" x2="754.65" y2="858.50" stroke="#111" stroke-width="1.2"/>
<text transform="translate(762.00,862.20) rotate(-90)" x="-23.00" y="0" font-size="8.6" fill="#111" textLength="23.00" lengthAdjust="spacingAndGlyphs">CES87</text>
<rect x="764.56" y="717.29" width="5.10" height="138.21" fill="#a870b0" stroke="#93629a" stroke-width="1"/>
<line x1="762.96" y1="855.50" x2="762.96" y2="858.50" stroke="#111" stroke-width="1.2"/>
<rect x="772.87" y="731.33" width="5.10" height="124.17" fill="#6c3c70" stroke="#5f3462" stroke-width="1"/>
<line x1="771.27" y1="855.50" x2="771.27" y2="858.50" stroke="#111" stroke-width="1.2"/>
<text transform="translate(778.62,862.20) rotate(-90)" x="-23.00" y="0" font-size="8.6" fill="#111" textLength="23.00" lengthAdjust="spacingAndGlyphs">CES89</text>
<rect x="781.18" y="722.09" width="5.10" height="133.41" fill="#844884" stroke="#743f74" stroke-width="1"/>
<line x1="779.58" y1="855.50" x2="779.58" y2="858.50" stroke="#111" stroke-width="1.2"/>
<rect x="789.49" y="710.09" width="5.10" height="145.41" fill="#c8bcc4" stroke="#b0a5ac" stroke-width="1"/>
<line x1="787.89" y1="855.50" x2="787.89" y2="858.50" stroke="#111" stroke-width="1.2"/>
<text transform="translate(795.24,862.20) rotate(-90)" x="-23.00" y="0" font-size="8.6" fill="#111" textLength="23.00" lengthAdjust="spacingAndGlyphs">CES91</text>
<rect x="797.80" y="748.87" width="5.10" height="106.63" fill="#986c8c" stroke="#855f7b" stroke-width="1"/>
<line x1="796.20" y1="855.50" x2="796.20" y2="858.50" stroke="#111" stroke-width="1.2"/>
<rect x="806.11" y="718.21" width="5.10" height="137.29" fill="#b490ac" stroke="#9e7e97" stroke-width="1"/>
<line x1="804.51" y1="855.50" x2="804.51" y2="858.50" stroke="#111" stroke-width="1.2"/>
<text transform="translate(811.86,862.20) rotate(-90)" x="-23.00" y="0" font-size="8.6" fill="#111" textLength="23.00" lengthAdjust="spacingAndGlyphs">CES93</text>
<rect x="814.42" y="765.50" width="5.10" height="90.00" fill="#7c3460" stroke="#6d2d54" stroke-width="1"/>
<line x1="812.82" y1="855.50" x2="812.82" y2="858.50" stroke="#111" stroke-width="1.2"/>
<rect x="822.73" y="738.53" width="5.10" height="116.97" fill="#c890b0" stroke="#b07e9a" stroke-width="1"/>
<line x1="821.13" y1="855.50" x2="821.13" y2="858.50" stroke="#111" stroke-width="1.2"/>
<text transform="translate(828.48,862.20) rotate(-90)" x="-23.00" y="0" font-size="8.6" fill="#111" textLength="23.00" lengthAdjust="spacingAndGlyphs">CES95</text>
<rect x="831.04" y="720.98" width="5.10" height="134.52" fill="#e0a4c4" stroke="#c590ac" stroke-width="1"/>
<line x1="829.44" y1="855.50" x2="829.44" y2="858.50" stroke="#111" stroke-width="1.2"/>
<rect x="839.36" y="708.24" width="5.10" height="147.26" fill="#a05480" stroke="#8c4970" stroke-width="1"/>
<line x1="837.76" y1="855.50" x2="837.76" y2="858.50" stroke="#111" stroke-width="1.2"/>
<text transform="translate(845.11,862.20) rotate(-90)" x="-23.00" y="0" font-size="8.6" fill="#111" textLength="23.00" lengthAdjust="spacingAndGlyphs">CES97</text>
<rect x="847.67" y="730.22" width="5.10" height="125.28" fill="#d46894" stroke="#ba5b82" stroke-width="1"/>
<line x1="846.07" y1="855.50" x2="846.07" y2="858.50" stroke="#111" stroke-width="1.2"/>
<rect x="855.98" y="752.57" width="5.10" height="102.93" fill="#b44474" stroke="#9e3b66" stroke-width="1"/>
<line x1="854.38" y1="855.50" x2="854.38" y2="858.50" stroke="#111" stroke-width="1.2"/>
<text transform="translate(861.73,862.20) rotate(-90)" x="-23.00" y="0" font-size="8.6" fill="#111" textLength="23.00" lengthAdjust="spacingAndGlyphs">CES99</text>
<line x1="862.69" y1="855.50" x2="862.69" y2="858.50" stroke="#111" stroke-width="1.2"/>
<rect x="873.00" y="728.74" width="6.20" height="126.76" fill="#fff" stroke="#111" stroke-width="1"/>
<text transform="translate(879.40,860.60) rotate(-90)" x="-8.80" y="0" font-size="9.3" fill="#111" font-weight="bold" textLength="8.80" lengthAdjust="spacingAndGlyphs">Rf</text>
<rect x="39.50" y="670.80" width="848.00" height="184.70" fill="none" stroke="#2c2c2c" stroke-width="1.45"/>
<text x="31.64" y="858.80" font-size="9.3" fill="#111" textLength="4.66" lengthAdjust="spacingAndGlyphs">0</text>
<line x1="39.50" y1="855.50" x2="41.50" y2="855.50" stroke="#111" stroke-width="1"/>
<text x="26.99" y="840.33" font-size="9.3" fill="#111" textLength="9.31" lengthAdjust="spacingAndGlyphs">10</text>
<line x1="39.50" y1="837.03" x2="41.50" y2="837.03" stroke="#111" stroke-width="1"/>
<text x="26.99" y="821.86" font-size="9.3" fill="#111" textLength="9.31" lengthAdjust="spacingAndGlyphs">20</text>
<line x1="39.50" y1="818.56" x2="41.50" y2="818.56" stroke="#111" stroke-width="1"/>
<text x="26.99" y="803.39" font-size="9.3" fill="#111" textLength="9.31" lengthAdjust="spacingAndGlyphs">30</text>
<line x1="39.50" y1="800.09" x2="41.50" y2="800.09" stroke="#111" stroke-width="1"/>
<text x="26.99" y="784.92" font-size="9.3" fill="#111" textLength="9.31" lengthAdjust="spacingAndGlyphs">40</text>
<line x1="39.50" y1="781.62" x2="41.50" y2="781.62" stroke="#111" stroke-width="1"/>
<text x="26.99" y="766.45" font-size="9.3" fill="#111" textLength="9.31" lengthAdjust="spacingAndGlyphs">50</text>
<line x1="39.50" y1="763.15" x2="41.50" y2="763.15" stroke="#111" stroke-width="1"/>
<text x="26.99" y="747.98" font-size="9.3" fill="#111" textLength="9.31" lengthAdjust="spacingAndGlyphs">60</text>
<line x1="39.50" y1="744.68" x2="41.50" y2="744.68" stroke="#111" stroke-width="1"/>
<text x="26.99" y="729.51" font-size="9.3" fill="#111" textLength="9.31" lengthAdjust="spacingAndGlyphs">70</text>
<line x1="39.50" y1="726.21" x2="41.50" y2="726.21" stroke="#111" stroke-width="1"/>
<text x="26.99" y="711.04" font-size="9.3" fill="#111" font-weight="bold" textLength="9.31" lengthAdjust="spacingAndGlyphs">80</text>
<line x1="39.50" y1="707.74" x2="41.50" y2="707.74" stroke="#111" stroke-width="1"/>
<text x="26.99" y="692.57" font-size="9.3" fill="#111" textLength="9.31" lengthAdjust="spacingAndGlyphs">90</text>
<line x1="39.50" y1="689.27" x2="41.50" y2="689.27" stroke="#111" stroke-width="1"/>
<text x="22.33" y="674.10" font-size="9.3" fill="#111" textLength="13.97" lengthAdjust="spacingAndGlyphs">100</text>
<line x1="39.50" y1="670.80" x2="41.50" y2="670.80" stroke="#111" stroke-width="1"/>
<rect x="14.50" y="904.50" width="102.00" height="16.00" fill="#e1e1e1" stroke="#adadad" stroke-width="1"/>
<text x="44.00" y="916.60" font-size="11.5" fill="#000" textLength="43.00" lengthAdjust="spacingAndGlyphs">Calibrate</text>
<rect x="130.50" y="904.50" width="102.50" height="16.00" fill="#e1e1e1" stroke="#adadad" stroke-width="1"/>
<text x="151.25" y="916.60" font-size="11.5" fill="#000" textLength="61.00" lengthAdjust="spacingAndGlyphs">Save to file...</text>
<rect x="749.00" y="904.50" width="61.50" height="16.00" fill="#e1e1e1" stroke="#adadad" stroke-width="1"/>
<text x="768.50" y="916.60" font-size="11.5" fill="#000" textLength="22.50" lengthAdjust="spacingAndGlyphs">Help</text>
<rect x="825.00" y="904.50" width="61.50" height="16.00" fill="#e1e1e1" stroke="#adadad" stroke-width="1"/>
<text x="842.25" y="916.60" font-size="11.5" fill="#000" textLength="27.00" lengthAdjust="spacingAndGlyphs">Close</text>
</svg>
</body></html>
